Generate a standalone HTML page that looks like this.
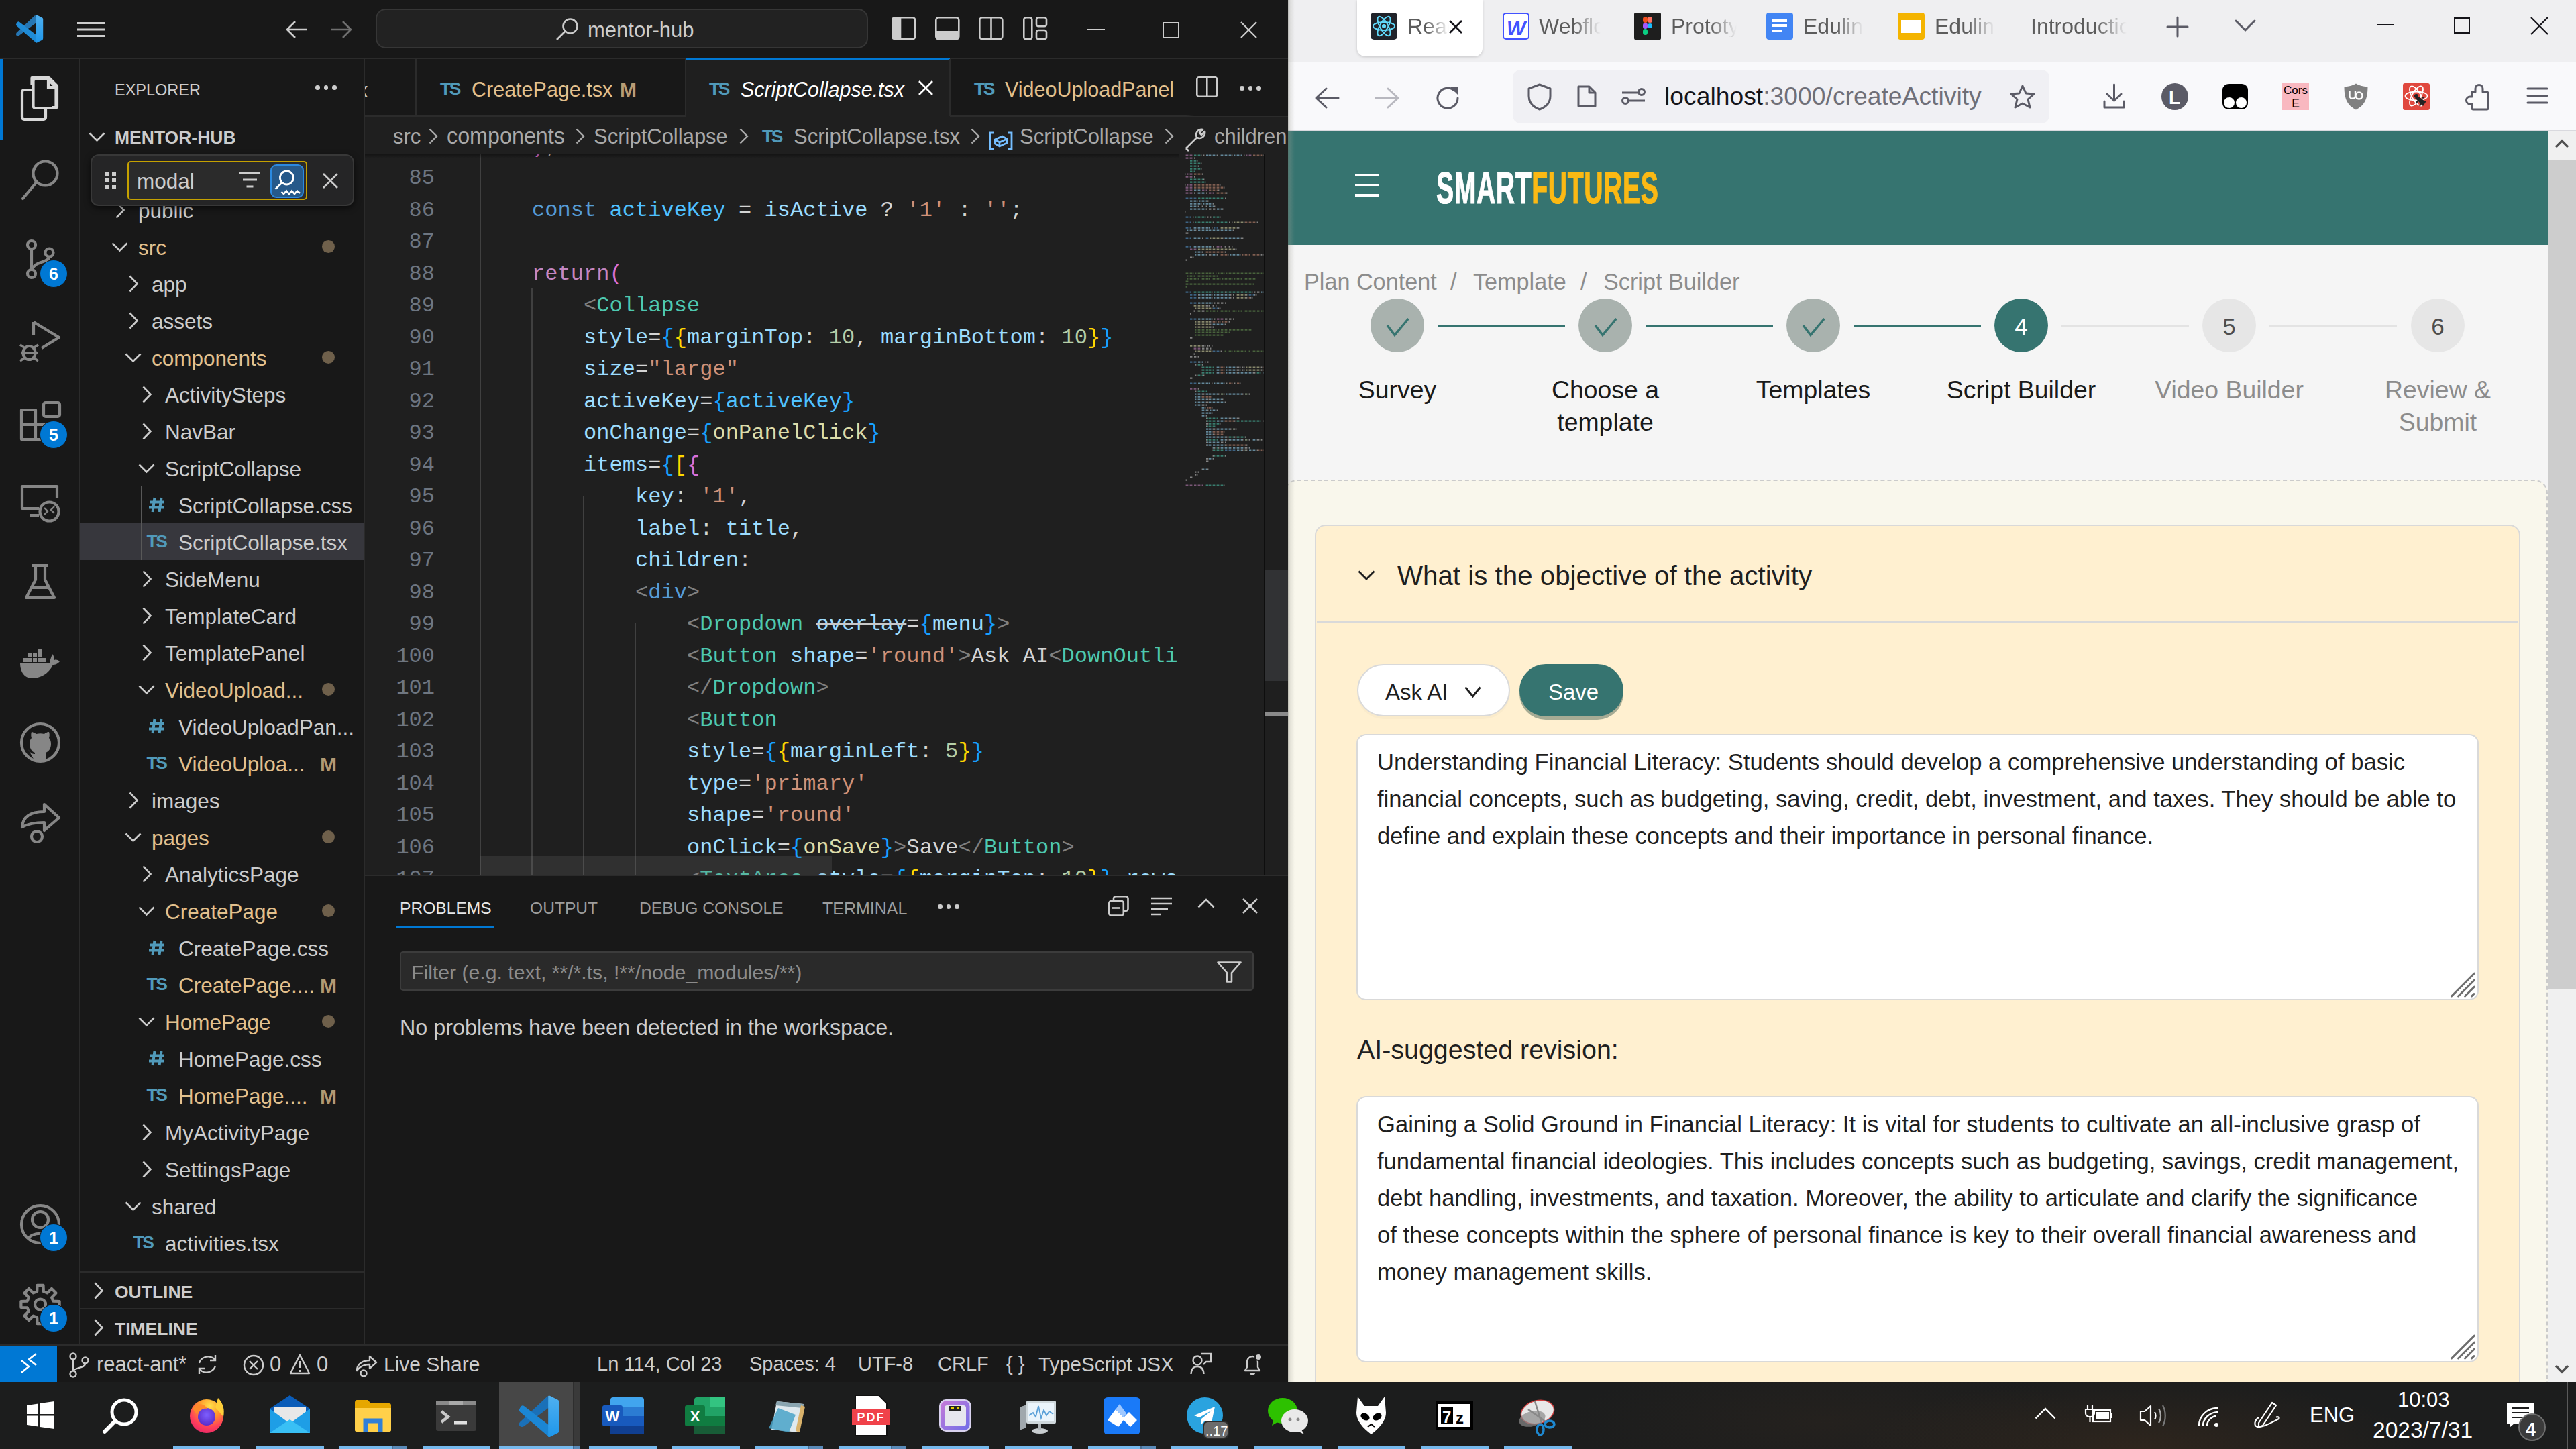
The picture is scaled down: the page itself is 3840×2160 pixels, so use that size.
<!DOCTYPE html><html><head><meta charset="utf-8"><style>
*{box-sizing:border-box;margin:0;padding:0}
html,body{width:3840px;height:2160px;overflow:hidden;background:#181818}
body{position:relative;font-family:"Liberation Sans",sans-serif}
.a{position:absolute}
.mono{font-family:"Liberation Mono",monospace}
svg.i{position:absolute;overflow:visible}
.nw{white-space:nowrap}
.t{position:absolute;white-space:nowrap;line-height:1}
</style></head><body><div class="a" style="left:0px;top:0px;width:1920px;height:2060px;background:#181818"></div><div class="a" style="left:0px;top:86px;width:1920px;height:2px;background:#2b2b2b"></div><div class="a" style="left:118px;top:88px;width:2px;height:1918px;background:#2b2b2b"></div><div class="a" style="left:542px;top:88px;width:2px;height:1918px;background:#2b2b2b"></div><div class="a" style="left:544px;top:88px;width:1376px;height:1217px;background:#1f1f1f"></div><div class="a" style="left:544px;top:88px;width:1376px;height:86px;background:#181818"></div><div class="a" style="left:544px;top:172px;width:1376px;height:2px;background:#2b2b2b"></div><div class="a" style="left:0px;top:2004px;width:1920px;height:2px;background:#2b2b2b"></div><svg class="i" style="left:0;top:0" width="80" height="80"><defs><linearGradient id="vsr" x1="0" y1="0" x2="0" y2="1"><stop offset="0" stop-color="#4fb0f0"/><stop offset="1" stop-color="#1e96ea"/></linearGradient></defs><path d="M52.6 22.6 L54 34 L29 52.6 Q26.5 54.6 24.4 52.4 Q23 50.5 24.8 48.6 Z" fill="#2676b3"/><path d="M24.6 35 Q23.2 36.8 24.8 38.6 L53.6 63.4 L54 52 L28.6 32.6 Q26.4 31.2 24.6 35 Z" fill="#1f8bd6"/><path d="M53 22.6 Q54 22 55 22.6 L63 26.6 Q64.2 27.4 64.2 29 V57 Q64.2 58.6 63 59.4 L55 63.4 Q54 64 53 63.4 Z" fill="url(#vsr)"/></svg><svg class="i" style="left:115px;top:33px;" width="41" height="22" viewBox="0 0 41 22"><rect x="0" y="0" width="41" height="3" fill="#cccccc"/><rect x="0" y="9.5" width="41" height="3" fill="#cccccc"/><rect x="0" y="19" width="41" height="3" fill="#cccccc"/></svg><svg class="i" style="left:426px;top:30px;" width="33" height="28" viewBox="0 0 33 28"><path d="M14 2 L2 14 L14 26 M2 14 H32" stroke="#cccccc" stroke-width="2.6" fill="none"/></svg><svg class="i" style="left:492px;top:30px;" width="33" height="28" viewBox="0 0 33 28"><path d="M19 2 L31 14 L19 26 M31 14 H1" stroke="#6f6f6f" stroke-width="2.6" fill="none"/></svg><div class="a" style="left:560px;top:13px;width:734px;height:59px;background:#222222;border:2px solid #363636;border-radius:15px"></div><svg class="i" style="left:828px;top:26px;" width="36" height="36" viewBox="0 0 36 36"><circle cx="22" cy="13" r="10.5" stroke="#cccccc" stroke-width="2.6" fill="none"/><path d="M14.5 20.5 L2 33" stroke="#cccccc" stroke-width="2.6"/></svg><div class="t" style="left:876px;top:28.75px;font-size:31px;color:#cccccc;">mentor-hub</div><svg class="i" style="left:1329px;top:25px;" width="37" height="35" viewBox="0 0 37 35"><rect x="1.3" y="1.3" width="34" height="32" rx="4" stroke="#cccccc" stroke-width="2.6" fill="none"/><rect x="1.3" y="1.3" width="13" height="32" fill="#cccccc"/></svg><svg class="i" style="left:1394px;top:25px;" width="37" height="35" viewBox="0 0 37 35"><rect x="1.3" y="1.3" width="34" height="32" rx="4" stroke="#cccccc" stroke-width="2.6" fill="none"/><rect x="1.3" y="21" width="34" height="12.3" fill="#cccccc"/></svg><svg class="i" style="left:1459px;top:25px;" width="37" height="35" viewBox="0 0 37 35"><rect x="1.3" y="1.3" width="34" height="32" rx="4" stroke="#cccccc" stroke-width="2.6" fill="none"/><path d="M18.5 1.3 V33.3" stroke="#cccccc" stroke-width="2.6"/></svg><svg class="i" style="left:1525px;top:25px;" width="37" height="35" viewBox="0 0 37 35"><rect x="1.3" y="1.3" width="12" height="32" rx="3" stroke="#cccccc" stroke-width="2.6" fill="none"/><rect x="20" y="1.3" width="15" height="13" rx="3" stroke="#cccccc" stroke-width="2.6" fill="none"/><rect x="20" y="20" width="15" height="13.3" rx="3" stroke="#cccccc" stroke-width="2.6" fill="none"/></svg><div class="a" style="left:1620px;top:43px;width:27px;height:2px;background:#cccccc"></div><div class="a" style="left:1733px;top:33px;width:25px;height:24px;border:2px solid #cccccc"></div><svg class="i" style="left:1849px;top:32px;" width="25" height="25" viewBox="0 0 25 25"><path d="M1 1 L24 24 M24 1 L1 24" stroke="#cccccc" stroke-width="2.2"/></svg><div class="a" style="left:0px;top:88px;width:5px;height:120px;background:#0078d4"></div><svg class="i" style="left:0;top:0" width="120" height="2060">
<path d="M47.5 126 V116 H73 L85 128 V160 H77" stroke="#d7d7d7" stroke-width="4.2" fill="none" stroke-linejoin="round"/>
<path d="M49.5 118 h22 l12 12 v28 a3 3 0 0 1 -3 3 h-28 a3 3 0 0 1 -3 -3 v-37 a3 3 0 0 1 3 -3z" stroke="#d7d7d7" stroke-width="4.2" fill="none"/>
<path d="M72 118 v12 h12" stroke="#d7d7d7" stroke-width="4.2" fill="none"/>
<path d="M47 134 h-11 a3 3 0 0 0 -3 3 v38 a3 3 0 0 0 3 3 h29 a3 3 0 0 0 3 -3 v-14" stroke="#d7d7d7" stroke-width="4.2" fill="none"/>
<circle cx="67.5" cy="258.5" r="18" stroke="#868686" stroke-width="4.2" fill="none"/>
<path d="M54.5 271.5 L34 296" stroke="#868686" stroke-width="4.2" stroke-linecap="round"/>
<circle cx="47" cy="365" r="6" stroke="#868686" stroke-width="4.2" fill="none"/>
<circle cx="47" cy="408" r="6" stroke="#868686" stroke-width="4.2" fill="none"/>
<circle cx="73.5" cy="376.5" r="6" stroke="#868686" stroke-width="4.2" fill="none"/>
<path d="M47 371 V402 M73.5 382.5 C73.5 392 52 388 48 402" stroke="#868686" stroke-width="4.2" fill="none"/>
<path d="M50 480 V500 M50 480 L88 503 L62 519" stroke="#868686" stroke-width="4.2" fill="none" stroke-linejoin="round"/>
<ellipse cx="43.5" cy="526" rx="9" ry="10" stroke="#868686" stroke-width="4.2" fill="none"/>
<path d="M30 514 L36 518 M30 538 L36 534 M57 514 L51 518 M57 538 L51 534 M31 526 H56" stroke="#868686" stroke-width="3.5"/>
<path d="M32 611 H53 V655 H32 Z M32 633 H67 V655 H53" stroke="#868686" stroke-width="4.2" fill="none" stroke-linejoin="round"/>
<rect x="65" y="600" width="24" height="21" rx="3" stroke="#868686" stroke-width="4.2" fill="none"/>
<path d="M85 742 V725 H33 V758 H58 M44 768 H58" stroke="#868686" stroke-width="4.2" fill="none" stroke-linejoin="round"/>
<circle cx="73.5" cy="762.5" r="14" stroke="#868686" stroke-width="4.2" fill="none"/>
<path d="M66 757 L71 762 L66 767 M81 755 L76 760 L81 765" stroke="#868686" stroke-width="2.4" fill="none"/>
<path d="M48 843 H72 M53 843 V864 L39 891 H81 L67 864 V843 M46 876 H74" stroke="#868686" stroke-width="4.2" fill="none" stroke-linejoin="round"/>
<path d="M30 988 H74 C75 982 77 978 78 975 C80 977 81 981 81 984 C84 983 87 984 89 986 C86 990 82 991 79 991 C72 1005 60 1011 48 1011 C36 1011 30 1001 30 988 Z" fill="#868686"/>
<g fill="#868686"><rect x="35" y="981" width="6" height="6"/><rect x="42" y="981" width="6" height="6"/><rect x="49" y="981" width="6" height="6"/><rect x="56" y="981" width="6" height="6"/><rect x="63" y="981" width="6" height="6"/><rect x="42" y="974" width="6" height="6"/><rect x="49" y="974" width="6" height="6"/><rect x="56" y="974" width="6" height="6"/><rect x="56" y="967" width="6" height="6"/></g>
<circle cx="60" cy="1107" r="28" stroke="#868686" stroke-width="4.2" fill="none"/>
<path d="M52 1135 V1124 C45 1124 44 1119 42 1117 M68 1135 V1122 C74 1120 76 1114 76 1109 C76 1105 75 1102 73 1100 C74 1097 74 1094 73 1091 C70 1091 67 1093 66 1094 C62 1093 58 1093 54 1094 C52 1093 49 1091 47 1091 C46 1094 46 1097 47 1100 C45 1102 44 1105 44 1109 C44 1114 47 1121 52 1122 V1135 Z" fill="#868686"/>
<path d="M33 1233 C34 1216 48 1210 66 1210 V1199 L88 1219 L66 1238 V1226 C52 1226 40 1229 33 1233 Z" stroke="#868686" stroke-width="4.2" fill="none" stroke-linejoin="round"/>
<circle cx="55" cy="1247" r="8" stroke="#868686" stroke-width="4.2" fill="none"/>
<circle cx="60" cy="1825" r="28" stroke="#868686" stroke-width="4.2" fill="none"/>
<circle cx="60" cy="1818" r="12" stroke="#868686" stroke-width="4.2" fill="none"/>
<path d="M42 1847 C46 1836 74 1836 78 1847" stroke="#868686" stroke-width="4.2" fill="none"/>
<circle cx="60" cy="1944.5" r="8" stroke="#868686" stroke-width="4.2" fill="none"/>
<path d="M55.2 1925.1 L55.5 1915.9 L64.5 1915.9 L64.8 1925.1 L70.3 1927.4 L77.0 1921.0 L83.5 1927.5 L77.1 1934.2 L79.4 1939.7 L88.6 1940.0 L88.6 1949.0 L79.4 1949.3 L77.1 1954.8 L83.5 1961.5 L77.0 1968.0 L70.3 1961.6 L64.8 1963.9 L64.5 1973.1 L55.5 1973.1 L55.2 1963.9 L49.7 1961.6 L43.0 1968.0 L36.5 1961.5 L42.9 1954.8 L40.6 1949.3 L31.4 1949.0 L31.4 1940.0 L40.6 1939.7 L42.9 1934.2 L36.5 1927.5 L43.0 1921.0 L49.7 1927.4 Z" stroke="#868686" stroke-width="4.2" fill="none" stroke-linejoin="round"/></svg><div class="a" style="left:59px;top:387px;width:42px;height:42px;background:#0078d4;border-radius:50%;border:1px solid #181818"></div><div class="t" style="left:59px;top:387px;width:42px;height:42px;line-height:42px;text-align:center;font-size:25px;font-weight:bold;color:#fff">6</div><div class="a" style="left:59px;top:627px;width:42px;height:42px;background:#0078d4;border-radius:50%;border:1px solid #181818"></div><div class="t" style="left:59px;top:627px;width:42px;height:42px;line-height:42px;text-align:center;font-size:25px;font-weight:bold;color:#fff">5</div><div class="a" style="left:59px;top:1824px;width:42px;height:42px;background:#0078d4;border-radius:50%;border:1px solid #181818"></div><div class="t" style="left:59px;top:1824px;width:42px;height:42px;line-height:42px;text-align:center;font-size:25px;font-weight:bold;color:#fff">1</div><div class="a" style="left:59px;top:1944px;width:42px;height:42px;background:#0078d4;border-radius:50%;border:1px solid #181818"></div><div class="t" style="left:59px;top:1944px;width:42px;height:42px;line-height:42px;text-align:center;font-size:25px;font-weight:bold;color:#fff">1</div><div class="t" style="left:171px;top:122.60px;font-size:23.5px;color:#cccccc;">EXPLORER</div><div class="a" style="left:470.0px;top:127px;width:6.5px;height:6.5px;background:#cccccc;border-radius:50%"></div><div class="a" style="left:482.5px;top:127px;width:6.5px;height:6.5px;background:#cccccc;border-radius:50%"></div><div class="a" style="left:495.0px;top:127px;width:6.5px;height:6.5px;background:#cccccc;border-radius:50%"></div><svg class="i" style="left:132px;top:197px;" width="26" height="14" viewBox="0 0 26 14"><path d="M1.5 1.5 L12.5 12.5 L23.5 1.5" stroke="#cccccc" stroke-width="2.6" fill="none"/></svg><div class="t" style="left:171px;top:191.56px;font-size:26.5px;color:#cccccc;font-weight:bold;">MENTOR-HUB</div><div class="a" style="left:120px;top:780px;width:422px;height:55px;background:#37373d"></div><div class="a" style="left:210px;top:725px;width:2px;height:110px;background:#585858"></div><svg class="i" style="left:172px;top:299.5px;" width="14" height="26" viewBox="0 0 14 26"><path d="M1.5 1.5 L12.5 13 L1.5 24.5" stroke="#cccccc" stroke-width="2.6" fill="none"/></svg><div class="t" style="left:206px;top:298.83px;font-size:31.5px;color:#cccccc;">public</div><svg class="i" style="left:166px;top:360.5px;" width="25" height="14" viewBox="0 0 25 14"><path d="M1.5 1.5 L12.5 12.5 L23.5 1.5" stroke="#cccccc" stroke-width="2.6" fill="none"/></svg><div class="t" style="left:206px;top:353.83px;font-size:31.5px;color:#e2c08d;">src</div><div class="a" style="left:480px;top:358.0px;width:19px;height:19px;background:#6f604b;border-radius:50%"></div><svg class="i" style="left:192px;top:409.5px;" width="14" height="26" viewBox="0 0 14 26"><path d="M1.5 1.5 L12.5 13 L1.5 24.5" stroke="#cccccc" stroke-width="2.6" fill="none"/></svg><div class="t" style="left:226px;top:408.83px;font-size:31.5px;color:#cccccc;">app</div><svg class="i" style="left:192px;top:464.5px;" width="14" height="26" viewBox="0 0 14 26"><path d="M1.5 1.5 L12.5 13 L1.5 24.5" stroke="#cccccc" stroke-width="2.6" fill="none"/></svg><div class="t" style="left:226px;top:463.83px;font-size:31.5px;color:#cccccc;">assets</div><svg class="i" style="left:186px;top:525.5px;" width="25" height="14" viewBox="0 0 25 14"><path d="M1.5 1.5 L12.5 12.5 L23.5 1.5" stroke="#cccccc" stroke-width="2.6" fill="none"/></svg><div class="t" style="left:226px;top:518.83px;font-size:31.5px;color:#e2c08d;">components</div><div class="a" style="left:480px;top:523.0px;width:19px;height:19px;background:#6f604b;border-radius:50%"></div><svg class="i" style="left:212px;top:574.5px;" width="14" height="26" viewBox="0 0 14 26"><path d="M1.5 1.5 L12.5 13 L1.5 24.5" stroke="#cccccc" stroke-width="2.6" fill="none"/></svg><div class="t" style="left:246px;top:573.83px;font-size:31.5px;color:#cccccc;">ActivitySteps</div><svg class="i" style="left:212px;top:629.5px;" width="14" height="26" viewBox="0 0 14 26"><path d="M1.5 1.5 L12.5 13 L1.5 24.5" stroke="#cccccc" stroke-width="2.6" fill="none"/></svg><div class="t" style="left:246px;top:628.83px;font-size:31.5px;color:#cccccc;">NavBar</div><svg class="i" style="left:206px;top:690.5px;" width="25" height="14" viewBox="0 0 25 14"><path d="M1.5 1.5 L12.5 12.5 L23.5 1.5" stroke="#cccccc" stroke-width="2.6" fill="none"/></svg><div class="t" style="left:246px;top:683.83px;font-size:31.5px;color:#cccccc;">ScriptCollapse</div><svg class="i" style="left:222px;top:741px;" width="24" height="23" viewBox="0 0 24 23"><path d="M8.5 1 L5.5 22 M18.5 1 L15.5 22 M1 7.5 H23 M0 15.5 H22" stroke="#519aba" stroke-width="4"/></svg><div class="t" style="left:266px;top:738.83px;font-size:31.5px;color:#cccccc;">ScriptCollapse.css</div><div class="t" style="left:218.5px;top:794.06px;font-size:26.5px;color:#519aba;font-weight:bold;letter-spacing:-2.5px">TS</div><div class="t" style="left:266px;top:793.83px;font-size:31.5px;color:#cccccc;">ScriptCollapse.tsx</div><svg class="i" style="left:212px;top:849.5px;" width="14" height="26" viewBox="0 0 14 26"><path d="M1.5 1.5 L12.5 13 L1.5 24.5" stroke="#cccccc" stroke-width="2.6" fill="none"/></svg><div class="t" style="left:246px;top:848.83px;font-size:31.5px;color:#cccccc;">SideMenu</div><svg class="i" style="left:212px;top:904.5px;" width="14" height="26" viewBox="0 0 14 26"><path d="M1.5 1.5 L12.5 13 L1.5 24.5" stroke="#cccccc" stroke-width="2.6" fill="none"/></svg><div class="t" style="left:246px;top:903.83px;font-size:31.5px;color:#cccccc;">TemplateCard</div><svg class="i" style="left:212px;top:959.5px;" width="14" height="26" viewBox="0 0 14 26"><path d="M1.5 1.5 L12.5 13 L1.5 24.5" stroke="#cccccc" stroke-width="2.6" fill="none"/></svg><div class="t" style="left:246px;top:958.83px;font-size:31.5px;color:#cccccc;">TemplatePanel</div><svg class="i" style="left:206px;top:1020.5px;" width="25" height="14" viewBox="0 0 25 14"><path d="M1.5 1.5 L12.5 12.5 L23.5 1.5" stroke="#cccccc" stroke-width="2.6" fill="none"/></svg><div class="t" style="left:246px;top:1013.83px;font-size:31.5px;color:#e2c08d;">VideoUpload...</div><div class="a" style="left:480px;top:1018.0px;width:19px;height:19px;background:#6f604b;border-radius:50%"></div><svg class="i" style="left:222px;top:1071px;" width="24" height="23" viewBox="0 0 24 23"><path d="M8.5 1 L5.5 22 M18.5 1 L15.5 22 M1 7.5 H23 M0 15.5 H22" stroke="#519aba" stroke-width="4"/></svg><div class="t" style="left:266px;top:1068.83px;font-size:31.5px;color:#cccccc;">VideoUploadPan...</div><div class="t" style="left:218.5px;top:1124.06px;font-size:26.5px;color:#519aba;font-weight:bold;letter-spacing:-2.5px">TS</div><div class="t" style="left:266px;top:1123.83px;font-size:31.5px;color:#e2c08d;">VideoUploa...</div><div class="t" style="left:477px;top:1125.10px;font-size:30px;color:#b09a74;font-weight:bold;">M</div><svg class="i" style="left:192px;top:1179.5px;" width="14" height="26" viewBox="0 0 14 26"><path d="M1.5 1.5 L12.5 13 L1.5 24.5" stroke="#cccccc" stroke-width="2.6" fill="none"/></svg><div class="t" style="left:226px;top:1178.83px;font-size:31.5px;color:#cccccc;">images</div><svg class="i" style="left:186px;top:1240.5px;" width="25" height="14" viewBox="0 0 25 14"><path d="M1.5 1.5 L12.5 12.5 L23.5 1.5" stroke="#cccccc" stroke-width="2.6" fill="none"/></svg><div class="t" style="left:226px;top:1233.83px;font-size:31.5px;color:#e2c08d;">pages</div><div class="a" style="left:480px;top:1238.0px;width:19px;height:19px;background:#6f604b;border-radius:50%"></div><svg class="i" style="left:212px;top:1289.5px;" width="14" height="26" viewBox="0 0 14 26"><path d="M1.5 1.5 L12.5 13 L1.5 24.5" stroke="#cccccc" stroke-width="2.6" fill="none"/></svg><div class="t" style="left:246px;top:1288.83px;font-size:31.5px;color:#cccccc;">AnalyticsPage</div><svg class="i" style="left:206px;top:1350.5px;" width="25" height="14" viewBox="0 0 25 14"><path d="M1.5 1.5 L12.5 12.5 L23.5 1.5" stroke="#cccccc" stroke-width="2.6" fill="none"/></svg><div class="t" style="left:246px;top:1343.83px;font-size:31.5px;color:#e2c08d;">CreatePage</div><div class="a" style="left:480px;top:1348.0px;width:19px;height:19px;background:#6f604b;border-radius:50%"></div><svg class="i" style="left:222px;top:1401px;" width="24" height="23" viewBox="0 0 24 23"><path d="M8.5 1 L5.5 22 M18.5 1 L15.5 22 M1 7.5 H23 M0 15.5 H22" stroke="#519aba" stroke-width="4"/></svg><div class="t" style="left:266px;top:1398.83px;font-size:31.5px;color:#cccccc;">CreatePage.css</div><div class="t" style="left:218.5px;top:1454.06px;font-size:26.5px;color:#519aba;font-weight:bold;letter-spacing:-2.5px">TS</div><div class="t" style="left:266px;top:1453.83px;font-size:31.5px;color:#e2c08d;">CreatePage....</div><div class="t" style="left:477px;top:1455.10px;font-size:30px;color:#b09a74;font-weight:bold;">M</div><svg class="i" style="left:206px;top:1515.5px;" width="25" height="14" viewBox="0 0 25 14"><path d="M1.5 1.5 L12.5 12.5 L23.5 1.5" stroke="#cccccc" stroke-width="2.6" fill="none"/></svg><div class="t" style="left:246px;top:1508.83px;font-size:31.5px;color:#e2c08d;">HomePage</div><div class="a" style="left:480px;top:1513.0px;width:19px;height:19px;background:#6f604b;border-radius:50%"></div><svg class="i" style="left:222px;top:1566px;" width="24" height="23" viewBox="0 0 24 23"><path d="M8.5 1 L5.5 22 M18.5 1 L15.5 22 M1 7.5 H23 M0 15.5 H22" stroke="#519aba" stroke-width="4"/></svg><div class="t" style="left:266px;top:1563.83px;font-size:31.5px;color:#cccccc;">HomePage.css</div><div class="t" style="left:218.5px;top:1619.06px;font-size:26.5px;color:#519aba;font-weight:bold;letter-spacing:-2.5px">TS</div><div class="t" style="left:266px;top:1618.83px;font-size:31.5px;color:#e2c08d;">HomePage....</div><div class="t" style="left:477px;top:1620.10px;font-size:30px;color:#b09a74;font-weight:bold;">M</div><svg class="i" style="left:212px;top:1674.5px;" width="14" height="26" viewBox="0 0 14 26"><path d="M1.5 1.5 L12.5 13 L1.5 24.5" stroke="#cccccc" stroke-width="2.6" fill="none"/></svg><div class="t" style="left:246px;top:1673.83px;font-size:31.5px;color:#cccccc;">MyActivityPage</div><svg class="i" style="left:212px;top:1729.5px;" width="14" height="26" viewBox="0 0 14 26"><path d="M1.5 1.5 L12.5 13 L1.5 24.5" stroke="#cccccc" stroke-width="2.6" fill="none"/></svg><div class="t" style="left:246px;top:1728.83px;font-size:31.5px;color:#cccccc;">SettingsPage</div><svg class="i" style="left:186px;top:1790.5px;" width="25" height="14" viewBox="0 0 25 14"><path d="M1.5 1.5 L12.5 12.5 L23.5 1.5" stroke="#cccccc" stroke-width="2.6" fill="none"/></svg><div class="t" style="left:226px;top:1783.83px;font-size:31.5px;color:#cccccc;">shared</div><div class="t" style="left:198.5px;top:1839.06px;font-size:26.5px;color:#519aba;font-weight:bold;letter-spacing:-2.5px">TS</div><div class="t" style="left:246px;top:1838.83px;font-size:31.5px;color:#cccccc;">activities.tsx</div><div class="a" style="left:135px;top:230px;width:393px;height:77px;background:#252526;border:2px solid #383838;border-radius:12px;box-shadow:0 3px 10px rgba(0,0,0,0.6)"></div><div class="a" style="left:190px;top:240px;width:268px;height:58px;background:#2b2b2b;border:2px solid #c5a100;border-radius:5px"></div><div class="a" style="left:157px;top:256px;width:6px;height:6px;background:#cccccc"></div><div class="a" style="left:167px;top:256px;width:6px;height:6px;background:#cccccc"></div><div class="a" style="left:157px;top:266px;width:6px;height:6px;background:#cccccc"></div><div class="a" style="left:167px;top:266px;width:6px;height:6px;background:#cccccc"></div><div class="a" style="left:157px;top:276px;width:6px;height:6px;background:#cccccc"></div><div class="a" style="left:167px;top:276px;width:6px;height:6px;background:#cccccc"></div><div class="t" style="left:204px;top:254.83px;font-size:31.5px;color:#cccccc;">modal</div><svg class="i" style="left:357px;top:256px;" width="32" height="24" viewBox="0 0 32 24"><path d="M0 2 H31 M5 12 H26 M10.5 22 H20.5" stroke="#cccccc" stroke-width="3"/></svg><div class="a" style="left:403px;top:245px;width:50px;height:50px;background:#26598a;border:2.5px solid #2b8ae0;border-radius:9px"></div><svg class="i" style="left:0;top:0" width="560" height="320"><circle cx="427.4" cy="265" r="10" stroke="#ffffff" stroke-width="2.8" fill="none"/><path d="M420.5 272 L410.5 282" stroke="#ffffff" stroke-width="2.8"/><path d="M419.5 286 L423 289 L427 284.5 L431 289 L435 284.5 L439 289 L443 284.5 L447 288" stroke="#ffffff" stroke-width="2.6" fill="none"/></svg><svg class="i" style="left:481px;top:258px;" width="23" height="23" viewBox="0 0 23 23"><path d="M1 1 L22 22 M22 1 L1 22" stroke="#cccccc" stroke-width="2.6"/></svg><div class="a" style="left:120px;top:1895px;width:422px;height:2px;background:#2b2b2b"></div><div class="a" style="left:120px;top:1950px;width:422px;height:2px;background:#2b2b2b"></div><svg class="i" style="left:140px;top:1911px;" width="14" height="26" viewBox="0 0 14 26"><path d="M1.5 1.5 L12.5 13 L1.5 24.5" stroke="#cccccc" stroke-width="2.6" fill="none"/></svg><div class="t" style="left:171px;top:1912.56px;font-size:26.5px;color:#cccccc;font-weight:bold;">OUTLINE</div><svg class="i" style="left:140px;top:1966px;" width="14" height="26" viewBox="0 0 14 26"><path d="M1.5 1.5 L12.5 13 L1.5 24.5" stroke="#cccccc" stroke-width="2.6" fill="none"/></svg><div class="t" style="left:171px;top:1967.56px;font-size:26.5px;color:#cccccc;font-weight:bold;">TIMELINE</div><div class="a" style="left:544px;top:100px;width:20px;height:60px;overflow:hidden"><div class="t" style="left:-11px;top:18.6px;font-size:31px;color:#c8c8c8">x</div></div><div class="a" style="left:619px;top:88px;width:2px;height:85px;background:#2b2b2b"></div><div class="t" style="left:656px;top:118.56px;font-size:26.5px;color:#519aba;font-weight:bold;letter-spacing:-2.5px">TS</div><div class="t" style="left:703px;top:118.18px;font-size:30.5px;color:#e2c08d;">CreatePage.tsx</div><div class="t" style="left:924px;top:118.60px;font-size:30px;color:#b79d75;font-weight:bold;">M</div><div class="a" style="left:1021px;top:88px;width:2px;height:85px;background:#2b2b2b"></div><div class="a" style="left:1023px;top:88px;width:393px;height:86px;background:#1f1f1f"></div><div class="a" style="left:1023px;top:87px;width:393px;height:3px;background:#0078d4"></div><div class="a" style="left:1415px;top:88px;width:2px;height:85px;background:#2b2b2b"></div><div class="t" style="left:1057px;top:118.56px;font-size:26.5px;color:#519aba;font-weight:bold;letter-spacing:-2.5px">TS</div><div class="t" style="left:1104px;top:118.18px;font-size:30.5px;color:#ffffff;font-style:italic;">ScriptCollapse.tsx</div><svg class="i" style="left:1369px;top:120px;" width="22" height="22" viewBox="0 0 22 22"><path d="M1 1 L21 21 M21 1 L1 21" stroke="#ffffff" stroke-width="2.6"/></svg><div class="t" style="left:1452px;top:118.56px;font-size:26.5px;color:#519aba;font-weight:bold;letter-spacing:-2.5px">TS</div><div class="t" style="left:1498px;top:118.18px;font-size:30.5px;color:#e2c08d;">VideoUploadPanel</div><div class="a" style="left:1768px;top:88px;width:152px;height:85px;background:linear-gradient(90deg,rgba(24,24,24,0) 0,#181818 12px)"></div><svg class="i" style="left:1783px;top:114px;" width="33" height="31" viewBox="0 0 33 31"><rect x="1.3" y="1.3" width="30" height="28.5" rx="3" stroke="#cccccc" stroke-width="2.6" fill="none"/><path d="M16.3 1.3 V29.8" stroke="#cccccc" stroke-width="2.6"/></svg><div class="a" style="left:1848.0px;top:128px;width:6.5px;height:6.5px;background:#cccccc;border-radius:50%"></div><div class="a" style="left:1860.5px;top:128px;width:6.5px;height:6.5px;background:#cccccc;border-radius:50%"></div><div class="a" style="left:1873.0px;top:128px;width:6.5px;height:6.5px;background:#cccccc;border-radius:50%"></div><div class="t" style="left:586px;top:188.25px;font-size:31px;color:#a9a9a9;">src</div><svg class="i" style="left:639px;top:191px;" width="14" height="24" viewBox="0 0 14 24"><path d="M1.5 1.5 L12 12 L1.5 22.5" stroke="#a9a9a9" stroke-width="2.4" fill="none"/></svg><div class="t" style="left:666px;top:187.15px;font-size:32.3px;color:#a9a9a9;">components</div><svg class="i" style="left:858px;top:191px;" width="14" height="24" viewBox="0 0 14 24"><path d="M1.5 1.5 L12 12 L1.5 22.5" stroke="#a9a9a9" stroke-width="2.4" fill="none"/></svg><div class="t" style="left:885px;top:188.25px;font-size:31px;color:#a9a9a9;">ScriptCollapse</div><svg class="i" style="left:1102px;top:191px;" width="14" height="24" viewBox="0 0 14 24"><path d="M1.5 1.5 L12 12 L1.5 22.5" stroke="#a9a9a9" stroke-width="2.4" fill="none"/></svg><div class="t" style="left:1136px;top:189.56px;font-size:26.5px;color:#519aba;font-weight:bold;letter-spacing:-2.5px">TS</div><div class="t" style="left:1183px;top:188.25px;font-size:31px;color:#a9a9a9;">ScriptCollapse.tsx</div><svg class="i" style="left:1447px;top:191px;" width="14" height="24" viewBox="0 0 14 24"><path d="M1.5 1.5 L12 12 L1.5 22.5" stroke="#a9a9a9" stroke-width="2.4" fill="none"/></svg><svg class="i" style="left:1474px;top:196px;" width="36" height="28" viewBox="0 0 36 28"><path d="M8 2 H2 V26 H8 M28 2 H34 V26 H28" stroke="#75beff" stroke-width="2.8" fill="none"/><path d="M9 12 L20 7 L27 11 V17 L16 22 L9 18 Z M9 12 L16 16 L27 11 M16 16 V22" stroke="#75beff" stroke-width="2.6" fill="none"/></svg><div class="t" style="left:1520px;top:188.25px;font-size:31px;color:#a9a9a9;">ScriptCollapse</div><svg class="i" style="left:1736px;top:191px;" width="14" height="24" viewBox="0 0 14 24"><path d="M1.5 1.5 L12 12 L1.5 22.5" stroke="#a9a9a9" stroke-width="2.4" fill="none"/></svg><svg class="i" style="left:1764px;top:189px;" width="36" height="36" viewBox="0 0 36 36"><path d="M4 32 L20 16 C17 9 22 3 29 4 L24 9 L27 12 L32 7 C33 14 27 19 20 16" stroke="#cccccc" stroke-width="2.6" fill="none" stroke-linejoin="round"/><path d="M4 32 L8 36" stroke="#cccccc" stroke-width="2.6"/></svg><div class="t" style="left:1810px;top:188.25px;font-size:31px;color:#a9a9a9;">children</div><div class="a" style="left:715px;top:230px;width:2px;height:1075px;background:#404040"></div><div class="a" style="left:792px;top:430px;width:2px;height:875px;background:#404040"></div><div class="a" style="left:869px;top:739px;width:2px;height:566px;background:#404040"></div><div class="a" style="left:946px;top:929px;width:2px;height:376px;background:#404040"></div><div class="a" style="left:544px;top:230px;width:1213px;height:1075px;overflow:hidden"><div class="t mono" style="left:249.0px;top:-27.02px;font-size:32px;letter-spacing:0.050px"><span style="color:#da70d6">)</span><span style="color:#d4d4d4">;</span></div><div class="t mono" style="right:1109px;top:20.48px;font-size:32px;color:#6e7681">85</div><div class="t mono" style="left:249.0px;top:67.98px;font-size:32px;letter-spacing:0.050px"><span style="color:#569cd6">const</span><span style="color:#d4d4d4"> </span><span style="color:#4fc1ff">activeKey</span><span style="color:#d4d4d4"> = </span><span style="color:#9cdcfe">isActive</span><span style="color:#d4d4d4"> ? </span><span style="color:#ce9178">&#x27;1&#x27;</span><span style="color:#d4d4d4"> : </span><span style="color:#ce9178">&#x27;&#x27;</span><span style="color:#d4d4d4">;</span></div><div class="t mono" style="right:1109px;top:67.98px;font-size:32px;color:#6e7681">86</div><div class="t mono" style="right:1109px;top:115.48px;font-size:32px;color:#6e7681">87</div><div class="t mono" style="left:249.0px;top:162.98px;font-size:32px;letter-spacing:0.050px"><span style="color:#c586c0">return</span><span style="color:#da70d6">(</span></div><div class="t mono" style="right:1109px;top:162.98px;font-size:32px;color:#6e7681">88</div><div class="t mono" style="left:326.0px;top:210.48px;font-size:32px;letter-spacing:0.050px"><span style="color:#808080">&lt;</span><span style="color:#4ec9b0">Collapse</span></div><div class="t mono" style="right:1109px;top:210.48px;font-size:32px;color:#6e7681">89</div><div class="t mono" style="left:326.0px;top:257.98px;font-size:32px;letter-spacing:0.050px"><span style="color:#9cdcfe">style</span><span style="color:#d4d4d4">=</span><span style="color:#179fff">{</span><span style="color:#ffd700">{</span><span style="color:#9cdcfe">marginTop</span><span style="color:#d4d4d4">: </span><span style="color:#b5cea8">10</span><span style="color:#d4d4d4">, </span><span style="color:#9cdcfe">marginBottom</span><span style="color:#d4d4d4">: </span><span style="color:#b5cea8">10</span><span style="color:#ffd700">}</span><span style="color:#179fff">}</span></div><div class="t mono" style="right:1109px;top:257.98px;font-size:32px;color:#6e7681">90</div><div class="t mono" style="left:326.0px;top:305.48px;font-size:32px;letter-spacing:0.050px"><span style="color:#9cdcfe">size</span><span style="color:#d4d4d4">=</span><span style="color:#ce9178">&quot;large&quot;</span></div><div class="t mono" style="right:1109px;top:305.48px;font-size:32px;color:#6e7681">91</div><div class="t mono" style="left:326.0px;top:352.98px;font-size:32px;letter-spacing:0.050px"><span style="color:#9cdcfe">activeKey</span><span style="color:#d4d4d4">=</span><span style="color:#179fff">{</span><span style="color:#4fc1ff">activeKey</span><span style="color:#179fff">}</span></div><div class="t mono" style="right:1109px;top:352.98px;font-size:32px;color:#6e7681">92</div><div class="t mono" style="left:326.0px;top:400.48px;font-size:32px;letter-spacing:0.050px"><span style="color:#9cdcfe">onChange</span><span style="color:#d4d4d4">=</span><span style="color:#179fff">{</span><span style="color:#dcdcaa">onPanelClick</span><span style="color:#179fff">}</span></div><div class="t mono" style="right:1109px;top:400.48px;font-size:32px;color:#6e7681">93</div><div class="t mono" style="left:326.0px;top:447.98px;font-size:32px;letter-spacing:0.050px"><span style="color:#9cdcfe">items</span><span style="color:#d4d4d4">=</span><span style="color:#179fff">{</span><span style="color:#ffd700">[</span><span style="color:#da70d6">{</span></div><div class="t mono" style="right:1109px;top:447.98px;font-size:32px;color:#6e7681">94</div><div class="t mono" style="left:403.0px;top:495.48px;font-size:32px;letter-spacing:0.050px"><span style="color:#9cdcfe">key</span><span style="color:#d4d4d4">: </span><span style="color:#ce9178">&#x27;1&#x27;</span><span style="color:#d4d4d4">,</span></div><div class="t mono" style="right:1109px;top:495.48px;font-size:32px;color:#6e7681">95</div><div class="t mono" style="left:403.0px;top:542.98px;font-size:32px;letter-spacing:0.050px"><span style="color:#9cdcfe">label</span><span style="color:#d4d4d4">: </span><span style="color:#9cdcfe">title</span><span style="color:#d4d4d4">,</span></div><div class="t mono" style="right:1109px;top:542.98px;font-size:32px;color:#6e7681">96</div><div class="t mono" style="left:403.0px;top:590.48px;font-size:32px;letter-spacing:0.050px"><span style="color:#9cdcfe">children</span><span style="color:#d4d4d4">:</span></div><div class="t mono" style="right:1109px;top:590.48px;font-size:32px;color:#6e7681">97</div><div class="t mono" style="left:403.0px;top:637.98px;font-size:32px;letter-spacing:0.050px"><span style="color:#808080">&lt;</span><span style="color:#569cd6">div</span><span style="color:#808080">&gt;</span></div><div class="t mono" style="right:1109px;top:637.98px;font-size:32px;color:#6e7681">98</div><div class="t mono" style="left:480.0px;top:685.48px;font-size:32px;letter-spacing:0.050px"><span style="color:#808080">&lt;</span><span style="color:#4ec9b0">Dropdown</span><span style="color:#d4d4d4"> </span><span style="color:#9cdcfe"><s style="text-decoration-color:#c8c8c8">overlay</s></span><span style="color:#d4d4d4">=</span><span style="color:#179fff">{</span><span style="color:#9cdcfe">menu</span><span style="color:#179fff">}</span><span style="color:#808080">&gt;</span></div><div class="t mono" style="right:1109px;top:685.48px;font-size:32px;color:#6e7681">99</div><div class="t mono" style="left:480.0px;top:732.98px;font-size:32px;letter-spacing:0.050px"><span style="color:#808080">&lt;</span><span style="color:#4ec9b0">Button</span><span style="color:#d4d4d4"> </span><span style="color:#9cdcfe">shape</span><span style="color:#d4d4d4">=</span><span style="color:#ce9178">&#x27;round&#x27;</span><span style="color:#808080">&gt;</span><span style="color:#d4d4d4">Ask AI</span><span style="color:#808080">&lt;</span><span style="color:#4ec9b0">DownOutlined</span></div><div class="t mono" style="right:1109px;top:732.98px;font-size:32px;color:#6e7681">100</div><div class="t mono" style="left:480.0px;top:780.48px;font-size:32px;letter-spacing:0.050px"><span style="color:#808080">&lt;/</span><span style="color:#4ec9b0">Dropdown</span><span style="color:#808080">&gt;</span></div><div class="t mono" style="right:1109px;top:780.48px;font-size:32px;color:#6e7681">101</div><div class="t mono" style="left:480.0px;top:827.98px;font-size:32px;letter-spacing:0.050px"><span style="color:#808080">&lt;</span><span style="color:#4ec9b0">Button</span></div><div class="t mono" style="right:1109px;top:827.98px;font-size:32px;color:#6e7681">102</div><div class="t mono" style="left:480.0px;top:875.48px;font-size:32px;letter-spacing:0.050px"><span style="color:#9cdcfe">style</span><span style="color:#d4d4d4">=</span><span style="color:#179fff">{</span><span style="color:#ffd700">{</span><span style="color:#9cdcfe">marginLeft</span><span style="color:#d4d4d4">: </span><span style="color:#b5cea8">5</span><span style="color:#ffd700">}</span><span style="color:#179fff">}</span></div><div class="t mono" style="right:1109px;top:875.48px;font-size:32px;color:#6e7681">103</div><div class="t mono" style="left:480.0px;top:922.98px;font-size:32px;letter-spacing:0.050px"><span style="color:#9cdcfe">type</span><span style="color:#d4d4d4">=</span><span style="color:#ce9178">&#x27;primary&#x27;</span></div><div class="t mono" style="right:1109px;top:922.98px;font-size:32px;color:#6e7681">104</div><div class="t mono" style="left:480.0px;top:970.48px;font-size:32px;letter-spacing:0.050px"><span style="color:#9cdcfe">shape</span><span style="color:#d4d4d4">=</span><span style="color:#ce9178">&#x27;round&#x27;</span></div><div class="t mono" style="right:1109px;top:970.48px;font-size:32px;color:#6e7681">105</div><div class="t mono" style="left:480.0px;top:1017.98px;font-size:32px;letter-spacing:0.050px"><span style="color:#9cdcfe">onClick</span><span style="color:#d4d4d4">=</span><span style="color:#179fff">{</span><span style="color:#dcdcaa">onSave</span><span style="color:#179fff">}</span><span style="color:#808080">&gt;</span><span style="color:#d4d4d4">Save</span><span style="color:#808080">&lt;/</span><span style="color:#4ec9b0">Button</span><span style="color:#808080">&gt;</span></div><div class="t mono" style="right:1109px;top:1017.98px;font-size:32px;color:#6e7681">106</div><div class="t mono" style="left:480.0px;top:1065.48px;font-size:32px;letter-spacing:0.050px"><span style="color:#808080">&lt;</span><span style="color:#4ec9b0">TextArea</span><span style="color:#d4d4d4"> </span><span style="color:#9cdcfe">style</span><span style="color:#d4d4d4">=</span><span style="color:#179fff">{</span><span style="color:#ffd700">{</span><span style="color:#9cdcfe">marginTop</span><span style="color:#d4d4d4">: </span><span style="color:#b5cea8">10</span><span style="color:#ffd700">}</span><span style="color:#179fff">}</span><span style="color:#d4d4d4"> </span><span style="color:#9cdcfe">rows</span></div><div class="t mono" style="right:1109px;top:1065.48px;font-size:32px;color:#6e7681">107</div></div><div class="a" style="left:544px;top:230px;width:1213px;height:6px;background:linear-gradient(#0000005c,#00000000)"></div><svg class="i" style="left:0;top:0" width="1920" height="1305"><path d="M1766 231.6h12M1858 231.6h8M1766 235.6h12M1770 259.6h8M1766 263.6h12M1770 275.6h8M1766 279.6h12M1766 283.6h12M1792 283.6h8M1766 287.6h12M1802 287.6h8M1812 367.6h10M1774 371.6h10M1814 475.6h10M1778 519.6h12M1774 579.6h12M1766 723.6h12M1780 723.6h14" stroke="#c586c0" stroke-width="2.4" stroke-dasharray="1.4 0.6" opacity="0.55"/><path d="M1780 231.6h10M1774 239.6h10M1774 243.6h16M1774 247.6h12M1774 251.6h16M1774 255.6h8M1774 267.6h20M1774 271.6h24M1786 295.6h38M1782 323.6h16M1808 323.6h10M1782 331.6h26M1812 331.6h18M1778 435.6h28M1810 435.6h16M1828 435.6h38M1784 543.6h8M1792 547.6h18M1792 551.6h18M1792 555.6h18M1872 555.6h8M1786 559.6h8M1784 583.6h16M1800 623.6h16M1800 627.6h12M1842 627.6h6M1850 627.6h4M1856 627.6h24M1802 631.6h16M1800 635.6h12M1832 651.6h8M1844 651.6h12M1800 655.6h16M1812 667.6h4M1808 671.6h16M1810 679.6h16M1796 723.6h28" stroke="#4ec9b0" stroke-width="2.4" stroke-dasharray="1.4 0.6" opacity="0.55"/><path d="M1790 231.6h2M1794 231.6h2M1814 231.6h2M1836 231.6h2M1854 231.6h2M1882 231.6h2M1780 235.6h2M1784 239.6h2M1790 243.6h2M1786 247.6h2M1790 251.6h2M1766 259.6h2M1792 259.6h2M1780 263.6h2M1794 267.6h2M1766 275.6h2M1818 275.6h2M1824 279.6h2M1816 283.6h2M1780 287.6h2M1798 287.6h2M1828 287.6h2M1826 295.6h2M1784 299.6h2M1800 299.6h2M1790 303.6h2M1808 303.6h2M1786 307.6h2M1790 307.6h2M1792 307.6h2M1796 307.6h2M1798 307.6h2M1810 307.6h2M1798 311.6h2M1802 311.6h2M1804 311.6h2M1808 311.6h2M1810 311.6h2M1822 311.6h2M1766 315.6h2M1778 323.6h2M1800 323.6h2M1804 323.6h2M1818 323.6h2M1778 331.6h2M1808 331.6h2M1832 331.6h2M1836 331.6h2M1854 331.6h2M1872 331.6h2M1874 331.6h2M1806 339.6h2M1844 339.6h2M1846 339.6h2M1782 343.6h2M1838 343.6h2M1766 347.6h2M1768 347.6h2M1770 347.6h2M1792 355.6h2M1822 355.6h2M1850 355.6h2M1852 355.6h2M1808 367.6h2M1824 367.6h2M1826 367.6h2M1830 367.6h2M1832 367.6h2M1836 367.6h2M1840 371.6h2M1842 371.6h2M1792 375.6h2M1826 375.6h2M1798 379.6h2M1802 379.6h2M1804 379.6h2M1814 379.6h2M1830 379.6h2M1848 379.6h2M1878 379.6h2M1880 379.6h2M1882 379.6h2M1774 383.6h2M1776 383.6h2M1778 383.6h2M1766 387.6h2M1768 387.6h2M1806 435.6h2M1826 435.6h2M1866 435.6h2M1870 435.6h2M1874 435.6h2M1876 435.6h2M1786 439.6h2M1806 439.6h2M1834 439.6h2M1838 439.6h2M1858 439.6h2M1870 439.6h2M1872 439.6h2M1786 443.6h2M1806 443.6h2M1834 443.6h2M1838 443.6h2M1858 443.6h2M1864 443.6h2M1866 443.6h2M1810 451.6h2M1814 451.6h2M1816 451.6h2M1820 451.6h2M1822 451.6h2M1826 451.6h2M1798 455.6h2M1800 455.6h2M1802 455.6h2M1806 455.6h2M1808 455.6h2M1812 455.6h2M1806 459.6h2M1816 459.6h2M1818 459.6h2M1778 463.6h2M1780 463.6h2M1792 463.6h2M1794 463.6h2M1774 467.6h2M1810 475.6h2M1826 475.6h2M1828 475.6h2M1832 475.6h2M1834 475.6h2M1838 475.6h2M1804 479.6h2M1830 479.6h2M1832 479.6h2M1804 483.6h2M1824 483.6h2M1826 483.6h2M1804 487.6h2M1806 487.6h2M1808 487.6h2M1774 503.6h2M1776 503.6h2M1792 515.6h2M1794 515.6h2M1796 515.6h2M1800 515.6h2M1802 515.6h2M1806 515.6h2M1792 519.6h2M1794 519.6h2M1798 519.6h2M1800 519.6h2M1804 519.6h2M1806 523.6h2M1818 523.6h2M1820 523.6h2M1778 527.6h2M1780 527.6h2M1774 531.6h2M1776 531.6h2M1780 531.6h2M1782 531.6h2M1784 531.6h2M1786 531.6h2M1796 539.6h2M1800 539.6h2M1782 543.6h2M1792 543.6h2M1790 547.6h2M1818 547.6h2M1842 547.6h2M1844 547.6h2M1846 547.6h2M1848 547.6h2M1852 547.6h2M1854 547.6h2M1880 547.6h2M1790 551.6h2M1818 551.6h2M1842 551.6h2M1844 551.6h2M1846 551.6h2M1848 551.6h2M1852 551.6h2M1854 551.6h2M1880 551.6h2M1790 555.6h2M1818 555.6h2M1842 555.6h2M1844 555.6h2M1868 555.6h2M1870 555.6h2M1782 559.6h2M1784 559.6h2M1794 559.6h2M1774 563.6h2M1776 563.6h2M1806 571.6h2M1828 571.6h2M1840 571.6h2M1848 571.6h2M1786 579.6h2M1782 583.6h2M1792 587.6h2M1794 587.6h2M1796 587.6h2M1816 587.6h2M1824 587.6h2M1852 587.6h2M1860 587.6h2M1862 587.6h2M1790 591.6h2M1800 595.6h2M1802 595.6h2M1822 595.6h2M1798 599.6h2M1800 599.6h2M1826 599.6h2M1792 603.6h2M1794 603.6h2M1796 603.6h2M1798 603.6h2M1796 607.6h2M1806 607.6h2M1800 611.6h2M1814 611.6h2M1806 615.6h2M1790 619.6h2M1798 619.6h2M1798 623.6h2M1832 623.6h2M1834 623.6h2M1844 623.6h2M1846 623.6h2M1798 627.6h2M1824 627.6h2M1840 627.6h2M1854 627.6h2M1882 627.6h2M1884 627.6h1M1798 631.6h2M1800 631.6h2M1818 631.6h2M1798 635.6h2M1808 639.6h2M1810 639.6h2M1812 639.6h2M1834 639.6h2M1840 639.6h2M1842 639.6h2M1806 643.6h2M1808 647.6h2M1812 651.6h2M1814 651.6h2M1828 651.6h2M1830 651.6h2M1840 651.6h2M1842 651.6h2M1856 651.6h2M1798 655.6h2M1828 655.6h2M1830 655.6h2M1832 655.6h2M1852 655.6h2M1860 655.6h2M1862 655.6h2M1874 655.6h2M1876 655.6h2M1880 655.6h2M1798 659.6h2M1820 659.6h2M1822 659.6h2M1826 659.6h2M1798 663.6h2M1826 663.6h2M1858 663.6h2M1806 667.6h2M1810 667.6h2M1816 667.6h2M1854 667.6h2M1856 667.6h2M1858 667.6h2M1862 667.6h2M1806 671.6h2M1852 671.6h2M1854 671.6h2M1858 671.6h2M1872 671.6h2M1874 671.6h2M1806 679.6h2M1808 679.6h2M1826 679.6h2M1798 683.6h2M1800 683.6h2M1808 683.6h2M1798 687.6h2M1800 687.6h2M1790 699.6h2M1792 699.6h2M1800 699.6h2M1782 703.6h2M1784 703.6h2M1786 703.6h2M1782 707.6h2M1784 707.6h2M1774 711.6h2M1776 711.6h2M1766 715.6h2M1768 715.6h2M1824 723.6h2" stroke="#d4d4d4" stroke-width="2.4" stroke-dasharray="1.4 0.6" opacity="0.55"/><path d="M1798 231.6h16M1818 231.6h18M1840 231.6h12M1780 283.6h10M1784 287.6h12M1774 299.6h10M1788 299.6h12M1774 303.6h16M1794 303.6h14M1774 307.6h12M1802 307.6h8M1774 311.6h24M1814 311.6h8M1778 339.6h26M1770 343.6h12M1786 343.6h52M1778 355.6h12M1824 355.6h26M1778 367.6h28M1782 375.6h10M1782 379.6h16M1806 379.6h8M1834 379.6h14M1880 435.6h5M1788 439.6h18M1810 439.6h24M1788 443.6h18M1810 443.6h24M1786 451.6h22M1786 475.6h22M1806 483.6h18M1786 539.6h8M1812 547.6h6M1828 547.6h14M1812 551.6h6M1828 551.6h14M1812 555.6h6M1828 555.6h14M1846 555.6h22M1882 555.6h3M1786 571.6h18M1810 571.6h16M1782 587.6h10M1798 587.6h18M1828 587.6h24M1782 591.6h8M1782 595.6h18M1804 595.6h18M1782 599.6h16M1802 599.6h24M1782 603.6h10M1790 607.6h6M1790 611.6h10M1804 611.6h10M1790 615.6h16M1792 619.6h6M1818 623.6h14M1836 623.6h8M1814 627.6h10M1798 639.6h10M1814 639.6h20M1798 643.6h8M1798 647.6h10M1798 651.6h14M1816 651.6h12M1818 655.6h10M1834 655.6h18M1866 655.6h8M1884 655.6h1M1800 659.6h18M1800 663.6h6M1808 663.6h18M1808 667.6h2M1818 667.6h18M1838 667.6h16M1860 667.6h2M1844 671.6h8M1862 671.6h10M1802 683.6h6M1794 699.6h6" stroke="#9cdcfe" stroke-width="2.4" stroke-dasharray="1.4 0.6" opacity="0.55"/><path d="M1868 231.6h14M1780 259.6h12M1780 275.6h38M1780 279.6h44M1802 283.6h14M1812 287.6h16M1856 331.6h16M1796 375.6h30M1818 379.6h12M1852 379.6h12M1866 379.6h12M1860 443.6h4M1806 479.6h8M1816 479.6h4M1822 479.6h8M1820 547.6h6M1882 547.6h3M1820 551.6h6M1882 551.6h3M1820 555.6h6M1832 571.6h6M1844 571.6h4M1792 591.6h14M1800 607.6h6M1826 627.6h14M1808 643.6h18M1810 647.6h14M1828 663.6h30M1876 671.6h9" stroke="#ce9178" stroke-width="2.4" stroke-dasharray="1.4 0.6" opacity="0.55"/><path d="M1766 295.6h18M1766 323.6h10M1766 331.6h10M1766 339.6h10M1810 339.6h6M1766 355.6h10M1796 355.6h6M1766 367.6h10M1766 435.6h10M1774 439.6h10M1860 439.6h10M1774 443.6h10M1774 451.6h10M1808 459.6h8M1774 475.6h10M1808 523.6h10M1774 539.6h10M1774 571.6h10M1826 671.6h16" stroke="#569cd6" stroke-width="2.4" stroke-dasharray="1.4 0.6" opacity="0.55"/><path d="M1840 331.6h14M1818 339.6h26M1804 355.6h18M1786 371.6h54M1842 439.6h16M1842 443.6h16M1778 455.6h20M1782 459.6h24M1782 479.6h22M1782 483.6h22M1782 487.6h22M1774 515.6h18M1782 523.6h24M1858 547.6h22M1858 551.6h22" stroke="#dcdcaa" stroke-width="2.4" stroke-dasharray="1.4 0.6" opacity="0.55"/><path d="M1766 407.6h14M1782 407.6h28M1812 407.6h2M1816 407.6h10M1828 407.6h57M1770 411.6h12M1784 411.6h32M1770 415.6h18M1790 415.6h14M1806 415.6h14M1822 415.6h16M1840 415.6h12M1854 415.6h18M1766 419.6h6M1766 423.6h104M1766 427.6h4M1798 463.6h4M1804 463.6h8M1814 463.6h2M1818 463.6h16M1836 463.6h8M1846 463.6h6M1854 463.6h18M1874 463.6h4M1880 463.6h5M1782 491.6h14M1798 491.6h16M1816 491.6h2M1820 491.6h10M1832 491.6h34M1782 495.6h52M1782 499.6h42M1824 523.6h4M1830 523.6h8M1840 523.6h18M1860 523.6h4M1866 523.6h18" stroke="#6a9955" stroke-width="2.4" stroke-dasharray="1.4 0.6" opacity="0.55"/><path d="M1784 463.6h8M1820 587.6h4M1856 587.6h4M1838 639.6h2M1856 655.6h4M1878 655.6h2M1856 671.6h2" stroke="#b5cea8" stroke-width="2.4" stroke-dasharray="1.4 0.6" opacity="0.55"/></svg><div class="a" style="left:1884px;top:230px;width:1.5px;height:1075px;background:#0e0e0e"></div><div class="a" style="left:1885px;top:849px;width:35px;height:166px;background:#313234"></div><div class="a" style="left:1886px;top:1062px;width:34px;height:5px;background:#8a8a8a"></div><div class="a" style="left:716px;top:1276px;width:524px;height:29px;background:rgba(121,121,121,0.2)"></div><div class="a" style="left:544px;top:1304px;width:1376px;height:2px;background:#2b2b2b"></div><div class="t" style="left:596px;top:1342.17px;font-size:24.6px;color:#e7e7e7;">PROBLEMS</div><div class="a" style="left:591px;top:1381px;width:145px;height:3px;background:#0078d4"></div><div class="t" style="left:790px;top:1342.17px;font-size:24.6px;color:#9d9d9d;">OUTPUT</div><div class="t" style="left:953px;top:1342.17px;font-size:24.6px;color:#9d9d9d;">DEBUG CONSOLE</div><div class="t" style="left:1226px;top:1341.83px;font-size:25px;color:#9d9d9d;">TERMINAL</div><div class="a" style="left:1398.0px;top:1348px;width:6.5px;height:6.5px;background:#cccccc;border-radius:50%"></div><div class="a" style="left:1410.5px;top:1348px;width:6.5px;height:6.5px;background:#cccccc;border-radius:50%"></div><div class="a" style="left:1423.0px;top:1348px;width:6.5px;height:6.5px;background:#cccccc;border-radius:50%"></div><svg class="i" style="left:1652px;top:1335px;" width="31" height="31" viewBox="0 0 31 31"><rect x="8" y="1.3" width="21.5" height="21.5" rx="3" stroke="#cccccc" stroke-width="2.6" fill="none"/><rect x="1.3" y="8" width="21.5" height="21.5" rx="3" stroke="#cccccc" stroke-width="2.6" fill="#181818"/><path d="M6 18.5 H18" stroke="#cccccc" stroke-width="2.6"/></svg><svg class="i" style="left:1716px;top:1337px;" width="31" height="28" viewBox="0 0 31 28"><path d="M0 2 H31 M0 10 H31 M0 18 H25 M0 26 H14" stroke="#cccccc" stroke-width="2.6"/></svg><svg class="i" style="left:1785px;top:1339px;" width="26" height="15" viewBox="0 0 26 15"><path d="M1.5 13.5 L13 2 L24.5 13.5" stroke="#cccccc" stroke-width="2.6" fill="none"/></svg><svg class="i" style="left:1852px;top:1339px;" width="23" height="23" viewBox="0 0 23 23"><path d="M1 1 L22 22 M22 1 L1 22" stroke="#cccccc" stroke-width="2.6"/></svg><div class="a" style="left:596px;top:1418px;width:1273px;height:59px;background:#2a2a2a;border:2px solid #3c3c3c;border-radius:5px"></div><div class="t" style="left:613px;top:1435.43px;font-size:30.2px;color:#8b8b8b;">Filter (e.g. text, **/*.ts, !**/node_modules/**)</div><svg class="i" style="left:1814px;top:1433px;" width="37" height="32" viewBox="0 0 37 32"><path d="M1.5 1.5 H35.5 L22 17 V30.5 H15 V17 Z" stroke="#cccccc" stroke-width="2.6" fill="none" stroke-linejoin="round"/></svg><div class="t" style="left:596px;top:1515.65px;font-size:32.3px;color:#cccccc;">No problems have been detected in the workspace.</div><div class="a" style="left:0px;top:2006px;width:85px;height:54px;background:#0078d4"></div><svg class="i" style="left:0px;top:2000px;" width="100" height="60" viewBox="0 0 100 60"><path d="M32 28 L43 37 L32 46 M54 18 L43 26.5 L54 35" stroke="#ffffff" stroke-width="2.6" fill="none"/></svg><svg class="i" style="left:103px;top:2016px;" width="30" height="38" viewBox="0 0 30 38"><circle cx="6" cy="6" r="4.5" stroke="#cccccc" stroke-width="2.4" fill="none"/><circle cx="6" cy="32" r="4.5" stroke="#cccccc" stroke-width="2.4" fill="none"/><circle cx="24" cy="12" r="4.5" stroke="#cccccc" stroke-width="2.4" fill="none"/><path d="M6 10.5 V27.5 M24 16.5 C24 24 8 22 6.5 27.5" stroke="#cccccc" stroke-width="2.4" fill="none"/></svg><div class="t" style="left:144px;top:2017.75px;font-size:31px;color:#cccccc;">react-ant*</div><svg class="i" style="left:292px;top:2019px;" width="34" height="30" viewBox="0 0 34 30"><path d="M5 13 C7 5 17 1 25 5 L29 8 M29 1 V9 H21 M29 17 C27 25 17 29 9 25 L5 22 M5 29 V21 H13" stroke="#cccccc" stroke-width="2.4" fill="none"/></svg><svg class="i" style="left:362px;top:2019px;" width="32" height="32" viewBox="0 0 32 32"><circle cx="16" cy="16" r="14" stroke="#cccccc" stroke-width="2.4" fill="none"/><path d="M10 10 L22 22 M22 10 L10 22" stroke="#cccccc" stroke-width="2.4"/></svg><div class="t" style="left:402px;top:2017.75px;font-size:31px;color:#cccccc;">0</div><svg class="i" style="left:431px;top:2018px;" width="32" height="31" viewBox="0 0 32 31"><path d="M16 2 L30 29 H2 Z" stroke="#cccccc" stroke-width="2.4" fill="none" stroke-linejoin="round"/><path d="M16 11 V21 M16 24 V27" stroke="#cccccc" stroke-width="2.4"/></svg><div class="t" style="left:472px;top:2017.75px;font-size:31px;color:#cccccc;">0</div><svg class="i" style="left:529px;top:2019px;" width="34" height="34" viewBox="0 0 34 34"><path d="M3 24 C3 14 12 9 22 9 V3 L32 12 L22 21 V15 C14 15 8 17 3 24 Z" stroke="#cccccc" stroke-width="2.4" fill="none" stroke-linejoin="round"/><circle cx="13" cy="28" r="4.5" stroke="#cccccc" stroke-width="2.4" fill="none"/></svg><div class="t" style="left:572px;top:2018.60px;font-size:30px;color:#cccccc;">Live Share</div><div class="t" style="left:890px;top:2019.45px;font-size:29px;color:#cccccc;">Ln 114, Col 23</div><div class="t" style="left:1117px;top:2019.45px;font-size:29px;color:#cccccc;">Spaces: 4</div><div class="t" style="left:1279px;top:2019.45px;font-size:29px;color:#cccccc;">UTF-8</div><div class="t" style="left:1398px;top:2019.45px;font-size:29px;color:#cccccc;">CRLF</div><div class="t" style="left:1500px;top:2019.45px;font-size:29px;color:#cccccc;">{ }</div><div class="t" style="left:1548px;top:2019.02px;font-size:29.5px;color:#cccccc;">TypeScript JSX</div><svg class="i" style="left:1774px;top:2016px;" width="32" height="34" viewBox="0 0 32 34"><circle cx="11" cy="12" r="6.5" stroke="#cccccc" stroke-width="2.4" fill="none"/><path d="M1.5 32 C2 24 6 21 11 21 C16 21 20 24 20.5 32" stroke="#cccccc" stroke-width="2.4" fill="none"/><path d="M16 2 H31 V14 H24 L20 18" stroke="#cccccc" stroke-width="2.4" fill="none"/></svg><svg class="i" style="left:1852px;top:2018px;" width="30" height="33" viewBox="0 0 30 33"><path d="M4 25 H26 L23 20 V13 C23 7 19 4 15 4 C11 4 7 7 7 13 V20 Z M12 28 C12 31 18 31 18 28" stroke="#cccccc" stroke-width="2.4" fill="none" stroke-linejoin="round"/></svg><div class="a" style="left:1870px;top:2017px;width:12px;height:12px;background:#cccccc;border-radius:50%;border:2px solid #181818"></div><div class="a" style="left:1920px;top:0;width:1920px;height:2060px;overflow:hidden"><div class="a" style="left:-1920px;top:0;width:3840px;height:2060px"><div class="a" style="left:1920px;top:0px;width:1920px;height:2060px;background:#f5f5f5"></div><div class="a" style="left:1920px;top:0px;width:1920px;height:93px;background:#efeff1"></div><div class="a" style="left:1920px;top:93px;width:1920px;height:103px;background:#f9f9fb"></div><div class="a" style="left:1920px;top:194px;width:1920px;height:2px;background:#d9d9de"></div><div class="a" style="left:2023px;top:0px;width:187px;height:84px;background:#ffffff;border-radius:0 0 12px 12px;box-shadow:0 1px 4px rgba(0,0,0,0.18)"></div><div class="a" style="left:2043px;top:19px;width:40px;height:40px;background:#20232a;border-radius:5px"></div><svg class="i" style="left:2043px;top:19px;" width="40" height="40" viewBox="0 0 40 40"><g fill="none" stroke="#61dafb" stroke-width="2"><ellipse cx="20" cy="20" rx="16" ry="6"/><ellipse cx="20" cy="20" rx="16" ry="6" transform="rotate(60 20 20)"/><ellipse cx="20" cy="20" rx="16" ry="6" transform="rotate(120 20 20)"/></g><circle cx="20" cy="20" r="3" fill="#61dafb"/></svg><div class="t" style="left:2098px;top:22.91px;width:62px;overflow:hidden;font-size:32px;color:#5c5c5c;-webkit-mask-image:linear-gradient(90deg,#000 28px,transparent 62px)">React App</div><svg class="i" style="left:2160px;top:30px;" width="20" height="20" viewBox="0 0 20 20"><path d="M1 1 L19 19 M19 1 L1 19" stroke="#15141a" stroke-width="2.6"/></svg><div class="a" style="left:2240px;top:19px;width:40px;height:40px;background:#ffffff;border:2.5px solid #4353ff;border-radius:5px"></div><div class="t" style="left:2246px;top:26.60px;font-size:30px;color:#4353ff;font-weight:bold;font-style:italic;letter-spacing:-1px">W</div><div class="t" style="left:2294px;top:22.91px;width:92px;overflow:hidden;font-size:32px;color:#5c5c5c;-webkit-mask-image:linear-gradient(90deg,#000 52px,transparent 92px)">Webflow</div><div class="a" style="left:2436px;top:19px;width:40px;height:40px;background:#1e1e1e;border-radius:2px"></div><svg class="i" style="left:2436px;top:19px;" width="40" height="40" viewBox="0 0 40 40"><rect x="13" y="6" width="7" height="9" rx="3.5" fill="#f24e1e"/><rect x="20" y="6" width="7" height="9" rx="3.5" fill="#ff7262"/><rect x="13" y="15" width="7" height="9" rx="3.5" fill="#a259ff"/><circle cx="23.5" cy="19.5" r="3.5" fill="#1abcfe"/><rect x="13" y="24" width="7" height="9" rx="3.5" fill="#0acf83"/></svg><div class="t" style="left:2491px;top:22.91px;width:98px;overflow:hidden;font-size:32px;color:#5c5c5c;-webkit-mask-image:linear-gradient(90deg,#000 58px,transparent 98px)">Prototype</div><div class="a" style="left:2633px;top:19px;width:40px;height:40px;background:#4285f4;border-radius:4px"></div><div class="a" style="left:2642px;top:29px;width:22px;height:4px;background:#fff"></div><div class="a" style="left:2642px;top:36px;width:22px;height:4px;background:#fff"></div><div class="a" style="left:2642px;top:44px;width:14px;height:4px;background:#fff"></div><div class="t" style="left:2688px;top:22.91px;width:90px;overflow:hidden;font-size:32px;color:#5c5c5c;-webkit-mask-image:linear-gradient(90deg,#000 50px,transparent 90px)">Edulink</div><div class="a" style="left:2829px;top:19px;width:40px;height:40px;background:#f4b400;border-radius:4px"></div><div class="a" style="left:2834px;top:30px;width:30px;height:19px;background:#fff"></div><div class="t" style="left:2884px;top:22.91px;width:90px;overflow:hidden;font-size:32px;color:#5c5c5c;-webkit-mask-image:linear-gradient(90deg,#000 50px,transparent 90px)">Edulink</div><div class="t" style="left:3027px;top:22.91px;width:143px;overflow:hidden;font-size:32px;color:#5c5c5c;-webkit-mask-image:linear-gradient(90deg,#000 98px,transparent 143px)">Introduction</div><svg class="i" style="left:3230px;top:25px;" width="32" height="30" viewBox="0 0 32 30"><path d="M16 1 V29 M1 15 H31" stroke="#5b5b66" stroke-width="3" stroke-linecap="round"/></svg><svg class="i" style="left:3331px;top:29px;" width="32" height="18" viewBox="0 0 32 18"><path d="M2 2 L16 16 L30 2" stroke="#5b5b66" stroke-width="3" fill="none" stroke-linecap="round"/></svg><div class="a" style="left:3543px;top:36px;width:25px;height:2px;background:#15141a"></div><div class="a" style="left:3658px;top:26px;width:24px;height:24px;border:2px solid #15141a"></div><svg class="i" style="left:3772px;top:25px;" width="27" height="27" viewBox="0 0 27 27"><path d="M1 1 L26 26 M26 1 L1 26" stroke="#15141a" stroke-width="2.2"/></svg><svg class="i" style="left:1960px;top:130px;" width="36" height="32" viewBox="0 0 36 32"><path d="M17 2 L2 16 L17 30 M2 16 H35" stroke="#5b5b66" stroke-width="3" fill="none" stroke-linecap="round" stroke-linejoin="round"/></svg><svg class="i" style="left:2050px;top:130px;" width="36" height="32" viewBox="0 0 36 32"><path d="M19 2 L34 16 L19 30 M34 16 H1" stroke="#b8b8bf" stroke-width="3" fill="none" stroke-linecap="round" stroke-linejoin="round"/></svg><svg class="i" style="left:2140px;top:128px;" width="37" height="37" viewBox="0 0 37 37"><path d="M33 18 A15 15 0 1 1 28 7" stroke="#5b5b66" stroke-width="3" fill="none" stroke-linecap="round"/><path d="M22 2 L34 1 L33 13 Z" fill="#5b5b66"/></svg><div class="a" style="left:2255px;top:104px;width:800px;height:80px;background:#f0f0f4;border-radius:12px"></div><svg class="i" style="left:2277px;top:124px;" width="36" height="40" viewBox="0 0 36 40"><path d="M18 2 L34 8 V19 C34 30 26 36 18 39 C10 36 2 30 2 19 V8 Z" stroke="#5b5b66" stroke-width="3" fill="none" stroke-linejoin="round"/></svg><svg class="i" style="left:2350px;top:127px;" width="30" height="34" viewBox="0 0 30 34"><path d="M3 2 H19 L28 11 V31 H3 Z M19 2 V11 H28" stroke="#5b5b66" stroke-width="3" fill="none" stroke-linejoin="round"/></svg><svg class="i" style="left:2417px;top:131px;" width="36" height="25" viewBox="0 0 36 25"><path d="M1 7 H24 M12 19 H35" stroke="#5b5b66" stroke-width="3"/><circle cx="30" cy="6" r="4.5" stroke="#5b5b66" stroke-width="3" fill="#f0f0f4"/><circle cx="6" cy="19" r="4.5" stroke="#5b5b66" stroke-width="3" fill="#f0f0f4"/></svg><div class="t" style="left:2481px;top:124.92px;font-size:37.3px;color:#15141a;">localhost<span style="color:#6f6f78">:3000/createActivity</span></div><svg class="i" style="left:2996px;top:126px;" width="38" height="37" viewBox="0 0 38 37"><path d="M19 2 L24 13 L36 14 L27 22 L30 34 L19 28 L8 34 L11 22 L2 14 L14 13 Z" stroke="#5b5b66" stroke-width="3" fill="none" stroke-linejoin="round"/></svg><svg class="i" style="left:3135px;top:124px;" width="33" height="38" viewBox="0 0 33 38"><path d="M16.5 2 V26 M6 16 L16.5 26 L27 16 M2 27 V36 H31 V27" stroke="#5b5b66" stroke-width="3" fill="none" stroke-linecap="round" stroke-linejoin="round"/></svg><div class="a" style="left:3222px;top:124px;width:40px;height:40px;background:#5b5b66;border-radius:50%"></div><div class="t" style="left:3233px;top:132.29px;font-size:28px;color:#ffffff;font-weight:bold;">L</div><div class="a" style="left:3313px;top:125px;width:38px;height:38px;background:#000;border-radius:9px"></div><div class="a" style="left:3315px;top:144.5px;width:16px;height:16px;background:#fff;border-radius:50%"></div><div class="a" style="left:3333px;top:144.5px;width:16px;height:16px;background:#fff;border-radius:50%"></div><div class="a" style="left:3402px;top:124px;width:40px;height:40px;background:#f9b8c0"></div><div class="t" style="left:3402px;top:125.5px;width:40px;text-align:center;font-size:17px;color:#000">Cors</div><div class="t" style="left:3402px;top:146px;width:40px;text-align:center;font-size:17.5px;color:#000">E</div><svg class="i" style="left:3494px;top:124px;" width="37" height="40" viewBox="0 0 37 40"><path d="M18 0.5 C22 3 28 5 35.5 5 C35.5 25 30 33 18 39.5 C6 33 0.5 25 0.5 5 C8 5 14 3 18 0.5 Z" fill="#808080"/><path d="M8.5 12 V19 C8.5 24 17 24 17 19 V12" stroke="#fff" stroke-width="2.4" fill="none"/><circle cx="22.5" cy="18.5" r="5" stroke="#fff" stroke-width="2.4" fill="none"/></svg><div class="a" style="left:3582px;top:124px;width:40px;height:40px;background:#e0483e;border-radius:3px"></div><svg class="i" style="left:3582px;top:124px;" width="40" height="40" viewBox="0 0 40 40"><g fill="none" stroke="#fff" stroke-width="1.8"><ellipse cx="20" cy="19" rx="16.5" ry="6.5"/><ellipse cx="20" cy="19" rx="16.5" ry="6.5" transform="rotate(60 20 19)"/><ellipse cx="20" cy="19" rx="16.5" ry="6.5" transform="rotate(120 20 19)"/></g><circle cx="20" cy="19" r="3" fill="#222"/><path d="M18 22 L30 34 L34 28 L24 20 Z" fill="#222"/><path d="M22 26 L20 30 M27 30 L25 34 M28 22 L32 21 M31 27 L35 27" stroke="#222" stroke-width="2"/></svg><svg class="i" style="left:3676px;top:123px;" width="36" height="42" viewBox="0 0 36 42"><path d="M9 14 H14 V9 A5.5 5.5 0 0 1 25 9 V14 H31 a2 2 0 0 1 2 2 V38 a2 2 0 0 1 -2 2 H11 a2 2 0 0 1 -2 -2 V32 H6 A5.5 5.5 0 0 1 6 21 H9 Z" stroke="#5b5b66" stroke-width="3" fill="none" stroke-linejoin="round"/></svg><svg class="i" style="left:3767px;top:130px;" width="31" height="25" viewBox="0 0 31 25"><path d="M1 2 H30 M1 12.5 H30 M1 23 H30" stroke="#5b5b66" stroke-width="3" stroke-linecap="round"/></svg><div class="a" style="left:1920px;top:196px;width:1879px;height:1864px;background:#f5f5f5"></div><div class="a" style="left:1920px;top:196px;width:1879px;height:169px;background:#367470"></div><div class="a" style="left:2020px;top:259px;width:36px;height:4px;background:#ffffff"></div><div class="a" style="left:2020px;top:274px;width:36px;height:4px;background:#ffffff"></div><div class="a" style="left:2020px;top:289px;width:36px;height:4px;background:#ffffff"></div><div class="t" style="left:2141px;top:245.5px;font-size:67px;font-weight:bold;transform-origin:0 0;transform:scaleX(0.585);letter-spacing:1px;-webkit-text-stroke:1.2px currentColor"><span style="color:#fff">SMART</span><span style="color:#fbb914">FUTURES</span></div><div class="t" style="left:1944px;top:403.04px;font-size:34.2px;color:#8c8c8c;">Plan Content</div><div class="t" style="left:2162px;top:403.04px;font-size:34.2px;color:#8c8c8c;">/</div><div class="t" style="left:2196px;top:403.04px;font-size:34.2px;color:#8c8c8c;">Template</div><div class="t" style="left:2356px;top:403.04px;font-size:34.2px;color:#8c8c8c;">/</div><div class="t" style="left:2390px;top:403.04px;font-size:34.2px;color:#8c8c8c;">Script Builder</div><div class="a" style="left:2043px;top:445px;width:80px;height:80px;background:#a9b2ae;border-radius:50%"></div><svg class="i" style="left:2067px;top:473px;" width="34" height="28" viewBox="0 0 34 28"><path d="M1 12 L12 26.5 L32.5 2" stroke="#367470" stroke-width="3.4" fill="none"/></svg><div class="a" style="left:2143px;top:485px;width:190px;height:3px;background:#367470"></div><div class="a" style="left:2353px;top:445px;width:80px;height:80px;background:#a9b2ae;border-radius:50%"></div><svg class="i" style="left:2377px;top:473px;" width="34" height="28" viewBox="0 0 34 28"><path d="M1 12 L12 26.5 L32.5 2" stroke="#367470" stroke-width="3.4" fill="none"/></svg><div class="a" style="left:2453px;top:485px;width:190px;height:3px;background:#367470"></div><div class="a" style="left:2663px;top:445px;width:80px;height:80px;background:#a9b2ae;border-radius:50%"></div><svg class="i" style="left:2687px;top:473px;" width="34" height="28" viewBox="0 0 34 28"><path d="M1 12 L12 26.5 L32.5 2" stroke="#367470" stroke-width="3.4" fill="none"/></svg><div class="a" style="left:2763px;top:485px;width:190px;height:3px;background:#367470"></div><div class="a" style="left:2973px;top:445px;width:80px;height:80px;background:#367470;border-radius:50%"></div><div class="t" style="left:2973px;top:447px;width:80px;height:80px;line-height:80px;text-align:center;font-size:35px;color:#fff">4</div><div class="a" style="left:3073px;top:485px;width:190px;height:3px;background:#e3e3e3"></div><div class="a" style="left:3283px;top:445px;width:80px;height:80px;background:#e6e6e6;border-radius:50%"></div><div class="t" style="left:3283px;top:447px;width:80px;height:80px;line-height:80px;text-align:center;font-size:35px;color:#4d4d4d">5</div><div class="a" style="left:3383px;top:485px;width:190px;height:3px;background:#e3e3e3"></div><div class="a" style="left:3594px;top:445px;width:80px;height:80px;background:#e6e6e6;border-radius:50%"></div><div class="t" style="left:3594px;top:447px;width:80px;height:80px;line-height:80px;text-align:center;font-size:35px;color:#4d4d4d">6</div><div class="t" style="left:1883px;width:400px;text-align:center;top:563.33px;font-size:37.4px;color:#1a1a1a">Survey</div><div class="t" style="left:2193px;width:400px;text-align:center;top:563.33px;font-size:37.4px;color:#1a1a1a">Choose a</div><div class="t" style="left:2193px;width:400px;text-align:center;top:610.83px;font-size:37.4px;color:#1a1a1a">template</div><div class="t" style="left:2503px;width:400px;text-align:center;top:563.33px;font-size:37.4px;color:#1a1a1a">Templates</div><div class="t" style="left:2813px;width:400px;text-align:center;top:563.33px;font-size:37.4px;color:#1a1a1a">Script Builder</div><div class="t" style="left:3123px;width:400px;text-align:center;top:563.33px;font-size:37.4px;color:#8c8c8c">Video Builder</div><div class="t" style="left:3434px;width:400px;text-align:center;top:563.33px;font-size:37.4px;color:#8c8c8c">Review &amp;</div><div class="t" style="left:3434px;width:400px;text-align:center;top:610.83px;font-size:37.4px;color:#8c8c8c">Submit</div><div class="a" style="left:1914px;top:715px;width:1884px;height:1400px;background:#f9f7ec;border:2px dashed #cbcbcb;border-radius:20px"></div><div class="a" style="left:1960px;top:782px;width:1797px;height:1400px;background:#fff0d0;border:2px solid #d9d9d9;border-radius:16px"></div><div class="a" style="left:1963px;top:926px;width:1791px;height:2px;background:#d9d9d9"></div><svg class="i" style="left:2024px;top:850px;" width="26" height="15" viewBox="0 0 26 15"><path d="M1.5 1.5 L13 13 L24.5 1.5" stroke="#1f1f1f" stroke-width="2.8" fill="none"/></svg><div class="t" style="left:2083px;top:838.88px;font-size:40.3px;color:#1f1f1f;">What is the objective of the activity</div><div class="a" style="left:2023px;top:990px;width:228px;height:78px;background:#fff;border:2px solid #d9d9d9;border-radius:39px;box-shadow:0 4px 0 rgba(0,0,0,0.02)"></div><div class="t" style="left:2065px;top:1015.06px;font-size:33px;color:#1f1f1f;">Ask AI</div><svg class="i" style="left:2183px;top:1023px;" width="25" height="17" viewBox="0 0 25 17"><path d="M1.5 1.5 L12.5 15 L23.5 1.5" stroke="#1f1f1f" stroke-width="2.8" fill="none"/></svg><div class="a" style="left:2265px;top:995px;width:155px;height:78px;background:#a6ab94;border-radius:39px"></div><div class="a" style="left:2265px;top:990px;width:155px;height:78px;background:#367470;border-radius:39px"></div><div class="t" style="left:2308px;top:1015.06px;font-size:33px;color:#ffffff;">Save</div><div class="a" style="left:2022px;top:1094px;width:1673px;height:397px;background:#fff;border:2px solid #d9d9d9;border-radius:14px"></div><div class="t" style="left:2053px;top:1118.70px;font-size:34.6px;color:#1f1f1f;">Understanding Financial Literacy: Students should develop a comprehensive understanding of basic</div><div class="t" style="left:2053px;top:1173.70px;font-size:34.6px;color:#1f1f1f;">financial concepts, such as budgeting, saving, credit, debt, investment, and taxes. They should be able to</div><div class="t" style="left:2053px;top:1228.70px;font-size:34.6px;color:#1f1f1f;">define and explain these concepts and their importance in personal finance.</div><svg class="i" style="left:3650px;top:1445px;" width="45" height="45" viewBox="0 0 45 45"><path d="M4.5 40 L38.5 6 M14.5 40 L38.5 16 M24.5 40 L38.5 26 M34.5 40 L38 36.5" stroke="#6e6e6e" stroke-width="3" stroke-linecap="round"/></svg><div class="t" style="left:2023px;top:1544.64px;font-size:39.4px;color:#1f1f1f;">AI-suggested revision:</div><div class="a" style="left:2022px;top:1634px;width:1673px;height:397px;background:#fff;border:2px solid #d9d9d9;border-radius:14px"></div><div class="t" style="left:2053px;top:1658.70px;font-size:34.6px;color:#1f1f1f;">Gaining a Solid Ground in Financial Literacy: It is vital for students to cultivate an all-inclusive grasp of</div><div class="t" style="left:2053px;top:1713.70px;font-size:34.6px;color:#1f1f1f;">fundamental financial ideologies. This includes concepts such as budgeting, savings, credit management,</div><div class="t" style="left:2053px;top:1768.70px;font-size:34.6px;color:#1f1f1f;">debt handling, investments, and taxation. Moreover, the ability to articulate and clarify the significance</div><div class="t" style="left:2053px;top:1823.70px;font-size:34.6px;color:#1f1f1f;">of these concepts within the sphere of personal finance is key to their overall financial awareness and</div><div class="t" style="left:2053px;top:1878.70px;font-size:34.6px;color:#1f1f1f;">money management skills.</div><svg class="i" style="left:3650px;top:1985px;" width="45" height="45" viewBox="0 0 45 45"><path d="M4.5 40 L38.5 6 M14.5 40 L38.5 16 M24.5 40 L38.5 26 M34.5 40 L38 36.5" stroke="#6e6e6e" stroke-width="3" stroke-linecap="round"/></svg><div class="a" style="left:3799px;top:196px;width:41px;height:1864px;background:#f0f0f0"></div><div class="a" style="left:3799px;top:238px;width:41px;height:1236px;background:#cdcdcd"></div><svg class="i" style="left:3808px;top:207px;" width="22" height="14" viewBox="0 0 22 14"><path d="M2 12 L11 3 L20 12" stroke="#505050" stroke-width="3.5" fill="none"/></svg><svg class="i" style="left:3808px;top:2034px;" width="22" height="14" viewBox="0 0 22 14"><path d="M2 2 L11 11 L20 2" stroke="#505050" stroke-width="3.5" fill="none"/></svg><div class="a" style="left:1920px;top:0px;width:10px;height:2060px;background:linear-gradient(90deg,rgba(120,120,110,0.45),rgba(160,160,150,0.25) 3px,rgba(200,200,190,0) 10px)"></div></div></div><div class="a" style="left:0px;top:2060px;width:3840px;height:100px;background:#1c1d1d"></div><div class="a" style="left:1900px;top:2060px;width:1940px;height:100px;background:radial-gradient(ellipse 420px 110px at 1290px 100px,rgba(85,55,30,0.32),rgba(0,0,0,0)),radial-gradient(ellipse 380px 100px at 820px 60px,rgba(70,50,35,0.2),rgba(0,0,0,0))"></div><div class="a" style="left:744px;top:2060px;width:110px;height:100px;background:#474747"></div><div class="a" style="left:854px;top:2060px;width:2px;height:100px;background:#2e2e2e"></div><div class="a" style="left:856px;top:2060px;width:9px;height:100px;background:#3a3a3a"></div><div class="a" style="left:258px;top:2155px;width:100px;height:5px;background:#76b9ed"></div><div class="a" style="left:382px;top:2155px;width:101px;height:5px;background:#76b9ed"></div><div class="a" style="left:506px;top:2155px;width:101px;height:5px;background:#76b9ed"></div><div class="a" style="left:630px;top:2155px;width:100px;height:5px;background:#76b9ed"></div><div class="a" style="left:744px;top:2155px;width:121px;height:5px;background:#76b9ed"></div><div class="a" style="left:878px;top:2155px;width:101px;height:5px;background:#76b9ed"></div><div class="a" style="left:1002px;top:2155px;width:101px;height:5px;background:#76b9ed"></div><div class="a" style="left:1126px;top:2155px;width:101px;height:5px;background:#76b9ed"></div><div class="a" style="left:1250px;top:2155px;width:101px;height:5px;background:#76b9ed"></div><div class="a" style="left:1374px;top:2155px;width:100px;height:5px;background:#76b9ed"></div><div class="a" style="left:1498px;top:2155px;width:100px;height:5px;background:#76b9ed"></div><div class="a" style="left:1622px;top:2155px;width:101px;height:5px;background:#76b9ed"></div><div class="a" style="left:1746px;top:2155px;width:100px;height:5px;background:#76b9ed"></div><div class="a" style="left:1869px;top:2155px;width:102px;height:5px;background:#76b9ed"></div><div class="a" style="left:1994px;top:2155px;width:101px;height:5px;background:#76b9ed"></div><div class="a" style="left:2118px;top:2155px;width:101px;height:5px;background:#76b9ed"></div><div class="a" style="left:2242px;top:2155px;width:101px;height:5px;background:#76b9ed"></div><div class="a" style="left:584px;top:2155px;width:23px;height:5px;background:#5a8ab8"></div><div class="a" style="left:584px;top:2155px;width:2px;height:5px;background:#4a6f94"></div><div class="a" style="left:854px;top:2155px;width:11px;height:5px;background:#5a8ab8"></div><div class="a" style="left:854px;top:2155px;width:2px;height:5px;background:#4a6f94"></div><div class="a" style="left:1204px;top:2155px;width:23px;height:5px;background:#5a8ab8"></div><div class="a" style="left:1204px;top:2155px;width:2px;height:5px;background:#4a6f94"></div><div class="a" style="left:1328px;top:2155px;width:23px;height:5px;background:#5a8ab8"></div><div class="a" style="left:1328px;top:2155px;width:2px;height:5px;background:#4a6f94"></div><div class="a" style="left:1700px;top:2155px;width:23px;height:5px;background:#5a8ab8"></div><div class="a" style="left:1700px;top:2155px;width:2px;height:5px;background:#4a6f94"></div><svg class="i" style="left:40px;top:2089px;" width="41" height="41" viewBox="0 0 41 41"><path d="M0 6 L17 3.5 V19 H0 Z M19.5 3 L41 0 V19 H19.5 Z M0 21.5 H17 V37.5 L0 35 Z M19.5 21.5 H41 V41 L19.5 38 Z" fill="#ffffff"/></svg><svg class="i" style="left:152px;top:2083px;" width="56" height="55" viewBox="0 0 56 55"><circle cx="33" cy="22" r="18" stroke="#ffffff" stroke-width="5" fill="none"/><path d="M20 35 L4 51" stroke="#ffffff" stroke-width="6" stroke-linecap="round"/></svg><svg class="i" style="left:281px;top:2082px;" width="54" height="54" viewBox="0 0 54 54"><defs><radialGradient id="ffg" cx="0.6" cy="0.2" r="0.9"><stop offset="0" stop-color="#ffe14a"/><stop offset="0.35" stop-color="#ff9a2b"/><stop offset="0.7" stop-color="#ff3f5a"/><stop offset="1" stop-color="#e3226b"/></radialGradient><radialGradient id="ffp" cx="0.5" cy="0.4" r="0.6"><stop offset="0" stop-color="#7d5fff"/><stop offset="1" stop-color="#5b2cc9"/></radialGradient></defs>
<circle cx="27" cy="29" r="25" fill="url(#ffg)"/><path d="M44 2 C52 10 54 20 52 30 L40 16 Z" fill="#ffcf3a"/><circle cx="27" cy="30" r="13" fill="url(#ffp)"/><path d="M6 18 C12 8 24 10 28 18 C20 16 14 20 12 26 Z" fill="#ff8a2b"/></svg><svg class="i" style="left:402px;top:2080px;" width="60" height="56" viewBox="0 0 60 56"><path d="M0 20 L30 0 L60 20 V56 H0 Z" fill="#0a5cb8"/><path d="M6 18 H54 V34 L30 46 L6 34 Z" fill="#e8e8e8"/><path d="M0 20 L30 42 L60 20 V56 H0 Z" fill="#1e9ee6"/><path d="M0 56 L30 36 L60 56 Z" fill="#39c0f5"/></svg><svg class="i" style="left:529px;top:2087px;" width="54" height="47" viewBox="0 0 54 47"><path d="M0 4 C0 2 1 0 3 0 H19 L24 5 H51 C53 5 54 6 54 8 V44 C54 46 53 47 51 47 H3 C1 47 0 46 0 44 Z" fill="#e6a700"/><path d="M0 12 H54 V44 C54 46 53 47 51 47 H3 C1 47 0 46 0 44 Z" fill="#ffd04a"/><path d="M16 47 V31 H38 V47" stroke="#2f7fd8" stroke-width="7" fill="none"/></svg><svg class="i" style="left:650px;top:2088px;" width="60" height="45" viewBox="0 0 60 45"><rect x="0" y="0" width="60" height="45" rx="3" fill="#3a3a3a"/><rect x="0" y="0" width="60" height="7" fill="#8a8a8a"/><rect x="20" y="0" width="20" height="7" fill="#a9a9a9"/><path d="M8 16 L18 24 L8 32" stroke="#c8c8c8" stroke-width="4.5" fill="none"/><rect x="27" y="31" width="19" height="4.5" fill="#e0e0e0"/></svg><svg class="i" style="left:0;top:2040" width="900" height="120"><g transform="translate(738.2,7.3) scale(1.49)"><path d="M52.6 22.6 L54 34 L29 52.6 Q26.5 54.6 24.4 52.4 Q23 50.5 24.8 48.6 Z" fill="#1a70b8"/><path d="M24.6 35 Q23.2 36.8 24.8 38.6 L53.6 63.4 L54 52 L28.6 32.6 Q26.4 31.2 24.6 35 Z" fill="#1b86d4"/><path d="M53 22.6 Q54 22 55 22.6 L63 26.6 Q64.2 27.4 64.2 29 V57 Q64.2 58.6 63 59.4 L55 63.4 Q54 64 53 63.4 Z" fill="url(#vsr)"/></g></svg><svg class="i" style="left:898px;top:2083px;" width="62" height="55" viewBox="0 0 62 55"><rect x="12" y="0" width="50" height="55" rx="4" fill="#41a5ee"/><rect x="12" y="14" width="50" height="14" fill="#2b7cd3"/><rect x="12" y="28" width="50" height="14" fill="#185abd"/><rect x="12" y="42" width="50" height="13" fill="#103f91"/><rect x="0" y="12" width="30" height="31" rx="3" fill="#185abd"/><text x="15" y="36" font-size="22" font-family="Liberation Sans" font-weight="bold" fill="#fff" text-anchor="middle">W</text></svg><svg class="i" style="left:1021px;top:2083px;" width="60" height="55" viewBox="0 0 60 55"><rect x="14" y="0" width="46" height="55" rx="4" fill="#21a366"/><rect x="37" y="0" width="23" height="14" fill="#33c481"/><rect x="14" y="28" width="46" height="14" fill="#107c41"/><rect x="14" y="42" width="46" height="13" fill="#185c37"/><rect x="0" y="12" width="30" height="31" rx="3" fill="#107c41"/><text x="15" y="36" font-size="22" font-family="Liberation Sans" font-weight="bold" fill="#fff" text-anchor="middle">X</text></svg><svg class="i" style="left:1146px;top:2085px;" width="54" height="52" viewBox="0 0 54 52"><path d="M12 4 L52 8 L44 50 L4 46 Z" fill="#dfe9ee"/><path d="M12 4 L52 8 L50 14 L10 10 Z" fill="#8aa5b0"/><path d="M0 44 L14 14 L40 24 L30 50 Z" fill="#4aa3c8" opacity="0.85"/><path d="M48 10 L54 12 L46 50 L40 48 Z" fill="#d9b26b"/></svg><svg class="i" style="left:1270px;top:2080px;" width="57" height="60" viewBox="0 0 57 60"><path d="M5 0 H40 L52 12 V60 H5 Z" fill="#ffffff" stroke="#111" stroke-width="2"/><rect x="0" y="20" width="57" height="24" fill="#f0424a"/><text x="28.5" y="39" font-size="18" font-family="Liberation Sans" font-weight="bold" fill="#fff" text-anchor="middle" letter-spacing="2">PDF</text></svg><svg class="i" style="left:1400px;top:2086px;" width="48" height="48" viewBox="0 0 48 48"><defs><linearGradient id="mtx" x1="0" y1="0" x2="1" y2="1"><stop offset="0" stop-color="#c67ad8"/><stop offset="1" stop-color="#6f6ee8"/></linearGradient></defs><rect x="0" y="0" width="48" height="48" rx="10" fill="#d8d2ee"/><rect x="2.5" y="2.5" width="43" height="43" rx="8" fill="url(#mtx)"/><rect x="8" y="9" width="32" height="31" rx="4" fill="#e6e6ee"/><rect x="15" y="10" width="18" height="8" fill="#222"/><rect x="18" y="12" width="4" height="3" fill="#e8d000"/><rect x="26" y="12" width="4" height="3" fill="#e8d000"/></svg><svg class="i" style="left:1520px;top:2088px;" width="54" height="50" viewBox="0 0 54 50"><rect x="10" y="0" width="44" height="34" rx="2" fill="#cfd8dc"/><rect x="13" y="3" width="38" height="28" fill="#eaf4fb"/><path d="M14 22 L20 18 L24 24 L28 8 L32 26 L36 14 L40 22 L44 16 L50 20" stroke="#5aa0d8" stroke-width="1.8" fill="none"/><path d="M0 10 L10 6 V40 L0 44 Z" fill="#a0a8ad"/><ellipse cx="30" cy="45" rx="12" ry="4" fill="#c8cdd0"/><rect x="28" y="34" width="4" height="10" fill="#b0b6ba"/></svg><svg class="i" style="left:1645px;top:2083px;" width="55" height="55" viewBox="0 0 55 55"><rect x="0" y="0" width="55" height="55" rx="6" fill="#1a7af8"/><path d="M6 34 L18 18 L30 30 L38 22 L50 34 L40 44 L30 34 L22 44 Z" fill="#ffffff"/><path d="M18 18 L24 10 L34 24 L30 30 Z" fill="#9fc8ff"/></svg><svg class="i" style="left:1769px;top:2083px;" width="55" height="55" viewBox="0 0 55 55"><circle cx="27" cy="27" r="27" fill="#2aa3df"/><path d="M11 27 L42 14 L36 42 L27 35 L22 40 L22 32 L38 19 L19 30 Z" fill="#ffffff"/></svg><div class="a" style="left:1793px;top:2118px;width:39px;height:27px;background:#6b6b6b;border-radius:8px;border:2px solid #2b2b2b"></div><div class="t" style="left:1797px;top:2123.07px;font-size:20px;color:#ffffff;">..17</div><svg class="i" style="left:1890px;top:2083px;" width="60" height="55" viewBox="0 0 60 55"><ellipse cx="22" cy="20" rx="22" ry="19" fill="#2dc100"/><path d="M8 34 L6 42 L16 36 Z" fill="#2dc100"/><ellipse cx="40" cy="35" rx="20" ry="17" fill="#e9e9e9"/><path d="M50 48 L54 55 L44 50 Z" fill="#e9e9e9"/><circle cx="33" cy="33" r="2.5" fill="#888"/><circle cx="45" cy="33" r="2.5" fill="#888"/></svg><svg class="i" style="left:2022px;top:2082px;" width="44" height="56" viewBox="0 0 44 56"><path d="M2 0 L12 14 H32 L42 0 L44 24 C44 38 30 50 22 56 C14 50 0 38 0 24 Z" fill="#ffffff"/><ellipse cx="13" cy="30" rx="7" ry="5" transform="rotate(30 13 30)" fill="#000"/><ellipse cx="31" cy="30" rx="7" ry="5" transform="rotate(-30 31 30)" fill="#000"/><path d="M17 45 L22 41 L27 45" stroke="#000" stroke-width="2" fill="none"/></svg><div class="a" style="left:2140px;top:2089px;width:56px;height:42px;background:#000"></div><div class="a" style="left:2144px;top:2093px;width:48px;height:34px;background:#fff"></div><div class="a" style="left:2148px;top:2097px;width:18px;height:26px;background:#000"></div><div class="t" style="left:2150px;top:2100.68px;font-size:24px;color:#ffffff;font-weight:bold;">7</div><div class="t" style="left:2170px;top:2101.68px;font-size:24px;color:#000000;font-weight:bold;">z</div><svg class="i" style="left:2264px;top:2083px;" width="56" height="56" viewBox="0 0 56 56"><ellipse cx="28" cy="22" rx="25" ry="17" transform="rotate(-15 28 22)" fill="#e8e8e8" stroke="#d04040" stroke-width="1.5"/><ellipse cx="20" cy="32" rx="20" ry="11" transform="rotate(-15 20 32)" fill="#8a8a8a" opacity="0.7"/><path d="M24 6 L34 38 M14 18 L40 36" stroke="#888" stroke-width="2.5"/><ellipse cx="32" cy="48" rx="5" ry="8" stroke="#1e88d0" stroke-width="3.5" fill="none"/><ellipse cx="46" cy="40" rx="7" ry="5" stroke="#1e88d0" stroke-width="3.5" fill="none"/></svg><svg class="i" style="left:3033px;top:2098px;" width="32" height="18" viewBox="0 0 32 18"><path d="M1.5 16.5 L16 2 L30.5 16.5" stroke="#ffffff" stroke-width="2.4" fill="none"/></svg><svg class="i" style="left:3108px;top:2094px;" width="42" height="27" viewBox="0 0 42 27"><path d="M4 1 V7 M11 1 V7 M1 7 H14 V13 C14 16 11 18 7.5 18 C4 18 1 16 1 13 Z M7.5 18 V26" stroke="#fff" stroke-width="2.2" fill="none"/><rect x="12" y="8" width="26" height="17" stroke="#fff" stroke-width="2.2" fill="none"/><rect x="16" y="11" width="20" height="11" fill="#fff"/><rect x="38" y="13" width="3" height="7" fill="#fff"/></svg><svg class="i" style="left:3189px;top:2093px;" width="40" height="35" viewBox="0 0 40 35"><path d="M2 11 H8 L17 3 V32 L8 24 H2 Z" stroke="#fff" stroke-width="2.2" fill="none" stroke-linejoin="round"/><path d="M23 12 C25 15 25 20 23 23" stroke="#fff" stroke-width="2.2" fill="none"/><path d="M29 7 C33 13 33 22 29 28" stroke="#aaa" stroke-width="2.2" fill="none"/><path d="M35 2 C40 11 40 24 35 33" stroke="#777" stroke-width="2.2" fill="none"/></svg><svg class="i" style="left:3276px;top:2097px;" width="31" height="30" viewBox="0 0 31 30"><path d="M2 28 C2 14 14 2 30 2 M8 28 C8 18 18 8 30 8 M14 28 C14 21 21 14 28 14" stroke="#fff" stroke-width="2.4" fill="none"/><circle cx="28" cy="27" r="3" fill="#fff"/></svg><svg class="i" style="left:3359px;top:2089px;" width="40" height="40" viewBox="0 0 40 40"><path d="M28 2 L34 6 L14 36 L8 38 L8 32 Z" stroke="#fff" stroke-width="2.2" fill="none" stroke-linejoin="round"/><path d="M8 24 C2 28 0 36 6 38 C14 40 30 30 38 26 C40 24 36 22 34 24" stroke="#fff" stroke-width="2.2" fill="none"/></svg><div class="t" style="left:3443px;top:2093.75px;font-size:31px;color:#ffffff;">ENG</div><div class="t" style="left:3574px;top:2071.25px;font-size:31px;color:#ffffff;">10:03</div><div class="t" style="left:3537px;top:2114.64px;font-size:33.5px;color:#ffffff;">2023/7/31</div><svg class="i" style="left:3736px;top:2090px;" width="42" height="37" viewBox="0 0 42 37"><path d="M1 1 H41 V32 H12 L6 37 V32 H1 Z" fill="#ffffff"/><path d="M8 9 H34 M8 16 H34 M8 23 H26" stroke="#1d1d1d" stroke-width="2.2"/></svg><div class="a" style="left:3754px;top:2107px;width:41px;height:41px;background:#3b3b3b;border:2px solid #6e6e6e;border-radius:50%"></div><div class="t" style="left:3765px;top:2118.14px;font-size:27px;color:#ffffff;font-weight:bold;">4</div><div class="a" style="left:3826px;top:2060px;width:2px;height:100px;background:#5a5a5a"></div></body></html>
